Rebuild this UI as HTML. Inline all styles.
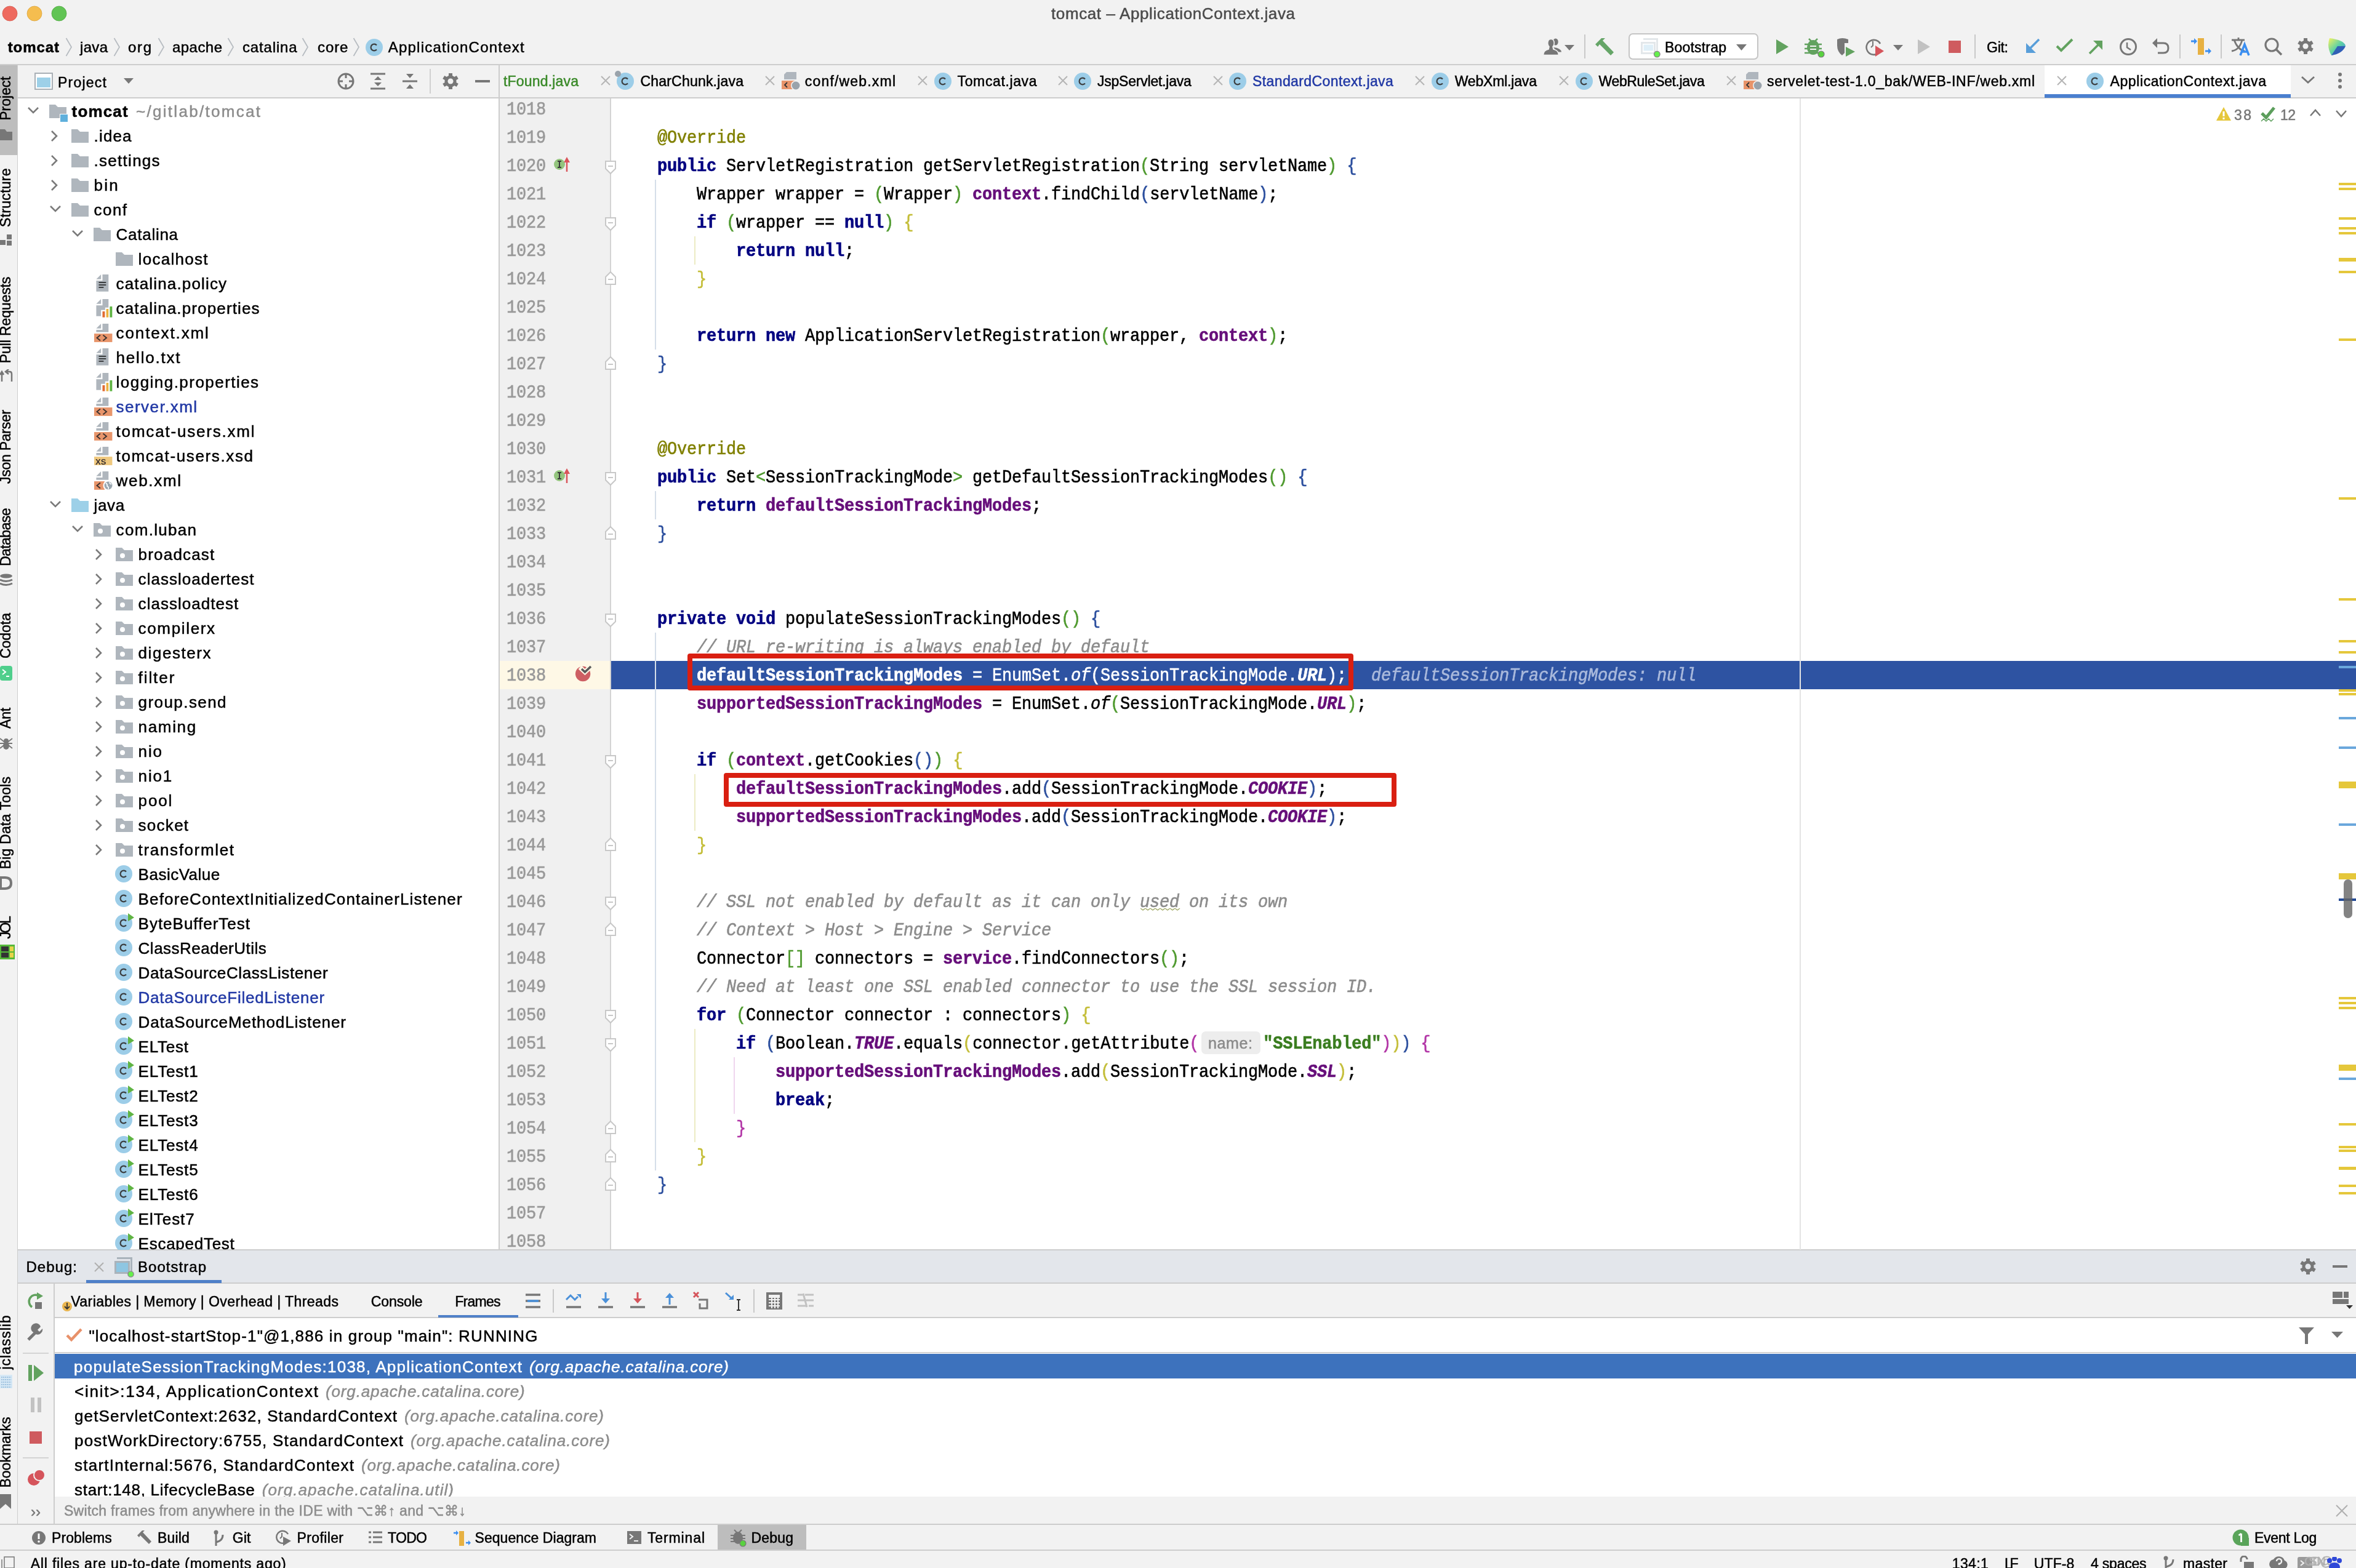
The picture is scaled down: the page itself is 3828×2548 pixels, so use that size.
<!DOCTYPE html>
<html><head><meta charset="utf-8"><style>
html,body{margin:0;padding:0;}
body{will-change:transform;width:3828px;height:2548px;overflow:hidden;position:relative;background:#f2f2f2;font-family:"Liberation Sans",sans-serif;}
</style></head><body>
<div style="position:absolute;left:0px;top:0px;width:3828px;height:104px;background:#f2f2f2;"></div>
<div style="position:absolute;left:0px;top:104px;width:3828px;height:2px;background:#cdcdcd;"></div>
<div style="position:absolute;left:0px;top:106px;width:28px;height:2412px;background:#f2f2f2;"></div>
<div style="position:absolute;left:28px;top:106px;width:1px;height:2412px;background:#cdcdcd;"></div>
<div style="position:absolute;left:0px;top:106px;width:28px;height:146px;background:#bdbdbd;"></div>
<div style="position:absolute;left:29px;top:106px;width:781px;height:53px;background:#f2f2f2;"></div>
<div style="position:absolute;left:29px;top:158px;width:781px;height:2px;background:#cdcdcd;"></div>
<div style="position:absolute;left:29px;top:160px;width:781px;height:1871px;background:#ffffff;"></div>
<div style="position:absolute;left:810px;top:106px;width:2px;height:1925px;background:#cdcdcd;"></div>
<div style="position:absolute;left:812px;top:106px;width:3016px;height:52px;background:#f2f2f2;"></div>
<div style="position:absolute;left:812px;top:158px;width:3016px;height:2px;background:#cdcdcd;"></div>
<div style="position:absolute;left:812px;top:160px;width:180px;height:1871px;background:#f0f0f0;"></div>
<div style="position:absolute;left:991px;top:160px;width:2px;height:1871px;background:#d3d3d3;"></div>
<div style="position:absolute;left:993px;top:160px;width:2835px;height:1871px;background:#ffffff;"></div>
<div style="position:absolute;left:29px;top:2030px;width:3799px;height:2px;background:#cdcdcd;"></div>
<div style="position:absolute;left:29px;top:2032px;width:3799px;height:52px;background:#e3e6eb;"></div>
<div style="position:absolute;left:29px;top:2084px;width:3799px;height:2px;background:#cdcdcd;"></div>
<div style="position:absolute;left:29px;top:2086px;width:58px;height:390px;background:#f2f2f2;"></div>
<div style="position:absolute;left:87px;top:2086px;width:2px;height:390px;background:#cdcdcd;"></div>
<div style="position:absolute;left:89px;top:2086px;width:3739px;height:54px;background:#f2f2f2;"></div>
<div style="position:absolute;left:89px;top:2140px;width:3739px;height:2px;background:#cdcdcd;"></div>
<div style="position:absolute;left:89px;top:2142px;width:3739px;height:56px;background:#ffffff;"></div>
<div style="position:absolute;left:89px;top:2197px;width:3739px;height:2px;background:#d4d4d4;"></div>
<div style="position:absolute;left:89px;top:2199px;width:3739px;height:233px;background:#ffffff;"></div>
<div style="position:absolute;left:89px;top:2200px;width:3739px;height:40px;background:#3d72bd;"></div>
<div style="position:absolute;left:89px;top:2432px;width:3739px;height:44px;background:#f2f2f2;"></div>
<div style="position:absolute;left:0px;top:2476px;width:3828px;height:2px;background:#cdcdcd;"></div>
<div style="position:absolute;left:0px;top:2478px;width:3828px;height:40px;background:#f2f2f2;"></div>
<div style="position:absolute;left:0px;top:2518px;width:3828px;height:2px;background:#cdcdcd;"></div>
<div style="position:absolute;left:0px;top:2520px;width:3828px;height:28px;background:#f2f2f2;"></div>
<div style="position:absolute;left:812px;top:1074px;width:179px;height:46px;background:#fef8e6;"></div>
<div style="position:absolute;left:993px;top:1074px;width:2835px;height:46px;background:#2e53a2;"></div>
<div style="position:absolute;left:1064.0px;top:292px;width:2px;height:276px;background:#d5dee9;"></div>
<div style="position:absolute;left:1128.0px;top:384px;width:2px;height:46px;background:#ecebc4;"></div>
<div style="position:absolute;left:1064.0px;top:798px;width:2px;height:46px;background:#d5dee9;"></div>
<div style="position:absolute;left:1064.0px;top:1028px;width:2px;height:874px;background:#d5dee9;"></div>
<div style="position:absolute;left:1128.0px;top:1258px;width:2px;height:92px;background:#ecebc4;"></div>
<div style="position:absolute;left:1128.0px;top:1672px;width:2px;height:184px;background:#ecebc4;"></div>
<div style="position:absolute;left:1192.0px;top:1718px;width:2px;height:92px;background:#efd6ee;"></div>
<div style="position:absolute;left:823px;top:155.5px;height:46px;transform:scaleY(1.12);transform-origin:0 30.5px;-webkit-text-stroke-width:0.55px;line-height:46px;font-family:'Liberation Mono',monospace;font-size:27px;letter-spacing:-0.202px;color:#999999;white-space:pre">1018</div>
<div style="position:absolute;left:823px;top:201.5px;height:46px;transform:scaleY(1.12);transform-origin:0 30.5px;-webkit-text-stroke-width:0.55px;line-height:46px;font-family:'Liberation Mono',monospace;font-size:27px;letter-spacing:-0.202px;color:#999999;white-space:pre">1019</div>
<div style="position:absolute;left:823px;top:247.5px;height:46px;transform:scaleY(1.12);transform-origin:0 30.5px;-webkit-text-stroke-width:0.55px;line-height:46px;font-family:'Liberation Mono',monospace;font-size:27px;letter-spacing:-0.202px;color:#999999;white-space:pre">1020</div>
<div style="position:absolute;left:823px;top:293.5px;height:46px;transform:scaleY(1.12);transform-origin:0 30.5px;-webkit-text-stroke-width:0.55px;line-height:46px;font-family:'Liberation Mono',monospace;font-size:27px;letter-spacing:-0.202px;color:#999999;white-space:pre">1021</div>
<div style="position:absolute;left:823px;top:339.5px;height:46px;transform:scaleY(1.12);transform-origin:0 30.5px;-webkit-text-stroke-width:0.55px;line-height:46px;font-family:'Liberation Mono',monospace;font-size:27px;letter-spacing:-0.202px;color:#999999;white-space:pre">1022</div>
<div style="position:absolute;left:823px;top:385.5px;height:46px;transform:scaleY(1.12);transform-origin:0 30.5px;-webkit-text-stroke-width:0.55px;line-height:46px;font-family:'Liberation Mono',monospace;font-size:27px;letter-spacing:-0.202px;color:#999999;white-space:pre">1023</div>
<div style="position:absolute;left:823px;top:431.5px;height:46px;transform:scaleY(1.12);transform-origin:0 30.5px;-webkit-text-stroke-width:0.55px;line-height:46px;font-family:'Liberation Mono',monospace;font-size:27px;letter-spacing:-0.202px;color:#999999;white-space:pre">1024</div>
<div style="position:absolute;left:823px;top:477.5px;height:46px;transform:scaleY(1.12);transform-origin:0 30.5px;-webkit-text-stroke-width:0.55px;line-height:46px;font-family:'Liberation Mono',monospace;font-size:27px;letter-spacing:-0.202px;color:#999999;white-space:pre">1025</div>
<div style="position:absolute;left:823px;top:523.5px;height:46px;transform:scaleY(1.12);transform-origin:0 30.5px;-webkit-text-stroke-width:0.55px;line-height:46px;font-family:'Liberation Mono',monospace;font-size:27px;letter-spacing:-0.202px;color:#999999;white-space:pre">1026</div>
<div style="position:absolute;left:823px;top:569.5px;height:46px;transform:scaleY(1.12);transform-origin:0 30.5px;-webkit-text-stroke-width:0.55px;line-height:46px;font-family:'Liberation Mono',monospace;font-size:27px;letter-spacing:-0.202px;color:#999999;white-space:pre">1027</div>
<div style="position:absolute;left:823px;top:615.5px;height:46px;transform:scaleY(1.12);transform-origin:0 30.5px;-webkit-text-stroke-width:0.55px;line-height:46px;font-family:'Liberation Mono',monospace;font-size:27px;letter-spacing:-0.202px;color:#999999;white-space:pre">1028</div>
<div style="position:absolute;left:823px;top:661.5px;height:46px;transform:scaleY(1.12);transform-origin:0 30.5px;-webkit-text-stroke-width:0.55px;line-height:46px;font-family:'Liberation Mono',monospace;font-size:27px;letter-spacing:-0.202px;color:#999999;white-space:pre">1029</div>
<div style="position:absolute;left:823px;top:707.5px;height:46px;transform:scaleY(1.12);transform-origin:0 30.5px;-webkit-text-stroke-width:0.55px;line-height:46px;font-family:'Liberation Mono',monospace;font-size:27px;letter-spacing:-0.202px;color:#999999;white-space:pre">1030</div>
<div style="position:absolute;left:823px;top:753.5px;height:46px;transform:scaleY(1.12);transform-origin:0 30.5px;-webkit-text-stroke-width:0.55px;line-height:46px;font-family:'Liberation Mono',monospace;font-size:27px;letter-spacing:-0.202px;color:#999999;white-space:pre">1031</div>
<div style="position:absolute;left:823px;top:799.5px;height:46px;transform:scaleY(1.12);transform-origin:0 30.5px;-webkit-text-stroke-width:0.55px;line-height:46px;font-family:'Liberation Mono',monospace;font-size:27px;letter-spacing:-0.202px;color:#999999;white-space:pre">1032</div>
<div style="position:absolute;left:823px;top:845.5px;height:46px;transform:scaleY(1.12);transform-origin:0 30.5px;-webkit-text-stroke-width:0.55px;line-height:46px;font-family:'Liberation Mono',monospace;font-size:27px;letter-spacing:-0.202px;color:#999999;white-space:pre">1033</div>
<div style="position:absolute;left:823px;top:891.5px;height:46px;transform:scaleY(1.12);transform-origin:0 30.5px;-webkit-text-stroke-width:0.55px;line-height:46px;font-family:'Liberation Mono',monospace;font-size:27px;letter-spacing:-0.202px;color:#999999;white-space:pre">1034</div>
<div style="position:absolute;left:823px;top:937.5px;height:46px;transform:scaleY(1.12);transform-origin:0 30.5px;-webkit-text-stroke-width:0.55px;line-height:46px;font-family:'Liberation Mono',monospace;font-size:27px;letter-spacing:-0.202px;color:#999999;white-space:pre">1035</div>
<div style="position:absolute;left:823px;top:983.5px;height:46px;transform:scaleY(1.12);transform-origin:0 30.5px;-webkit-text-stroke-width:0.55px;line-height:46px;font-family:'Liberation Mono',monospace;font-size:27px;letter-spacing:-0.202px;color:#999999;white-space:pre">1036</div>
<div style="position:absolute;left:823px;top:1029.5px;height:46px;transform:scaleY(1.12);transform-origin:0 30.5px;-webkit-text-stroke-width:0.55px;line-height:46px;font-family:'Liberation Mono',monospace;font-size:27px;letter-spacing:-0.202px;color:#999999;white-space:pre">1037</div>
<div style="position:absolute;left:823px;top:1075.5px;height:46px;transform:scaleY(1.12);transform-origin:0 30.5px;-webkit-text-stroke-width:0.55px;line-height:46px;font-family:'Liberation Mono',monospace;font-size:27px;letter-spacing:-0.202px;color:#999999;white-space:pre">1038</div>
<div style="position:absolute;left:823px;top:1121.5px;height:46px;transform:scaleY(1.12);transform-origin:0 30.5px;-webkit-text-stroke-width:0.55px;line-height:46px;font-family:'Liberation Mono',monospace;font-size:27px;letter-spacing:-0.202px;color:#999999;white-space:pre">1039</div>
<div style="position:absolute;left:823px;top:1167.5px;height:46px;transform:scaleY(1.12);transform-origin:0 30.5px;-webkit-text-stroke-width:0.55px;line-height:46px;font-family:'Liberation Mono',monospace;font-size:27px;letter-spacing:-0.202px;color:#999999;white-space:pre">1040</div>
<div style="position:absolute;left:823px;top:1213.5px;height:46px;transform:scaleY(1.12);transform-origin:0 30.5px;-webkit-text-stroke-width:0.55px;line-height:46px;font-family:'Liberation Mono',monospace;font-size:27px;letter-spacing:-0.202px;color:#999999;white-space:pre">1041</div>
<div style="position:absolute;left:823px;top:1259.5px;height:46px;transform:scaleY(1.12);transform-origin:0 30.5px;-webkit-text-stroke-width:0.55px;line-height:46px;font-family:'Liberation Mono',monospace;font-size:27px;letter-spacing:-0.202px;color:#999999;white-space:pre">1042</div>
<div style="position:absolute;left:823px;top:1305.5px;height:46px;transform:scaleY(1.12);transform-origin:0 30.5px;-webkit-text-stroke-width:0.55px;line-height:46px;font-family:'Liberation Mono',monospace;font-size:27px;letter-spacing:-0.202px;color:#999999;white-space:pre">1043</div>
<div style="position:absolute;left:823px;top:1351.5px;height:46px;transform:scaleY(1.12);transform-origin:0 30.5px;-webkit-text-stroke-width:0.55px;line-height:46px;font-family:'Liberation Mono',monospace;font-size:27px;letter-spacing:-0.202px;color:#999999;white-space:pre">1044</div>
<div style="position:absolute;left:823px;top:1397.5px;height:46px;transform:scaleY(1.12);transform-origin:0 30.5px;-webkit-text-stroke-width:0.55px;line-height:46px;font-family:'Liberation Mono',monospace;font-size:27px;letter-spacing:-0.202px;color:#999999;white-space:pre">1045</div>
<div style="position:absolute;left:823px;top:1443.5px;height:46px;transform:scaleY(1.12);transform-origin:0 30.5px;-webkit-text-stroke-width:0.55px;line-height:46px;font-family:'Liberation Mono',monospace;font-size:27px;letter-spacing:-0.202px;color:#999999;white-space:pre">1046</div>
<div style="position:absolute;left:823px;top:1489.5px;height:46px;transform:scaleY(1.12);transform-origin:0 30.5px;-webkit-text-stroke-width:0.55px;line-height:46px;font-family:'Liberation Mono',monospace;font-size:27px;letter-spacing:-0.202px;color:#999999;white-space:pre">1047</div>
<div style="position:absolute;left:823px;top:1535.5px;height:46px;transform:scaleY(1.12);transform-origin:0 30.5px;-webkit-text-stroke-width:0.55px;line-height:46px;font-family:'Liberation Mono',monospace;font-size:27px;letter-spacing:-0.202px;color:#999999;white-space:pre">1048</div>
<div style="position:absolute;left:823px;top:1581.5px;height:46px;transform:scaleY(1.12);transform-origin:0 30.5px;-webkit-text-stroke-width:0.55px;line-height:46px;font-family:'Liberation Mono',monospace;font-size:27px;letter-spacing:-0.202px;color:#999999;white-space:pre">1049</div>
<div style="position:absolute;left:823px;top:1627.5px;height:46px;transform:scaleY(1.12);transform-origin:0 30.5px;-webkit-text-stroke-width:0.55px;line-height:46px;font-family:'Liberation Mono',monospace;font-size:27px;letter-spacing:-0.202px;color:#999999;white-space:pre">1050</div>
<div style="position:absolute;left:823px;top:1673.5px;height:46px;transform:scaleY(1.12);transform-origin:0 30.5px;-webkit-text-stroke-width:0.55px;line-height:46px;font-family:'Liberation Mono',monospace;font-size:27px;letter-spacing:-0.202px;color:#999999;white-space:pre">1051</div>
<div style="position:absolute;left:823px;top:1719.5px;height:46px;transform:scaleY(1.12);transform-origin:0 30.5px;-webkit-text-stroke-width:0.55px;line-height:46px;font-family:'Liberation Mono',monospace;font-size:27px;letter-spacing:-0.202px;color:#999999;white-space:pre">1052</div>
<div style="position:absolute;left:823px;top:1765.5px;height:46px;transform:scaleY(1.12);transform-origin:0 30.5px;-webkit-text-stroke-width:0.55px;line-height:46px;font-family:'Liberation Mono',monospace;font-size:27px;letter-spacing:-0.202px;color:#999999;white-space:pre">1053</div>
<div style="position:absolute;left:823px;top:1811.5px;height:46px;transform:scaleY(1.12);transform-origin:0 30.5px;-webkit-text-stroke-width:0.55px;line-height:46px;font-family:'Liberation Mono',monospace;font-size:27px;letter-spacing:-0.202px;color:#999999;white-space:pre">1054</div>
<div style="position:absolute;left:823px;top:1857.5px;height:46px;transform:scaleY(1.12);transform-origin:0 30.5px;-webkit-text-stroke-width:0.55px;line-height:46px;font-family:'Liberation Mono',monospace;font-size:27px;letter-spacing:-0.202px;color:#999999;white-space:pre">1055</div>
<div style="position:absolute;left:823px;top:1903.5px;height:46px;transform:scaleY(1.12);transform-origin:0 30.5px;-webkit-text-stroke-width:0.55px;line-height:46px;font-family:'Liberation Mono',monospace;font-size:27px;letter-spacing:-0.202px;color:#999999;white-space:pre">1056</div>
<div style="position:absolute;left:823px;top:1949.5px;height:46px;transform:scaleY(1.12);transform-origin:0 30.5px;-webkit-text-stroke-width:0.55px;line-height:46px;font-family:'Liberation Mono',monospace;font-size:27px;letter-spacing:-0.202px;color:#999999;white-space:pre">1057</div>
<div style="position:absolute;left:823px;top:1995.5px;height:46px;transform:scaleY(1.12);transform-origin:0 30.5px;-webkit-text-stroke-width:0.55px;line-height:46px;font-family:'Liberation Mono',monospace;font-size:27px;letter-spacing:-0.202px;color:#999999;white-space:pre">1058</div>
<div style="position:absolute;left:1004px;top:201.5px;height:46px;transform:scaleY(1.12);transform-origin:0 30.5px;-webkit-text-stroke-width:0.55px;line-height:46px;font-family:'Liberation Mono',monospace;font-size:27px;letter-spacing:-0.202px;white-space:pre"><span style="color:#000">    </span><span style="color:#808000">@Override</span></div>
<div style="position:absolute;left:1004px;top:247.5px;height:46px;transform:scaleY(1.12);transform-origin:0 30.5px;-webkit-text-stroke-width:0.55px;line-height:46px;font-family:'Liberation Mono',monospace;font-size:27px;letter-spacing:-0.202px;white-space:pre"><span style="color:#000">    </span><span style="color:#000080;font-weight:bold">public</span><span style="color:#000"> ServletRegistration getServletRegistration</span><span style="color:#4f9a2f">(</span><span style="color:#000">String servletName</span><span style="color:#4f9a2f">)</span><span style="color:#000"> </span><span style="color:#2c4f9e">{</span></div>
<div style="position:absolute;left:1004px;top:293.5px;height:46px;transform:scaleY(1.12);transform-origin:0 30.5px;-webkit-text-stroke-width:0.55px;line-height:46px;font-family:'Liberation Mono',monospace;font-size:27px;letter-spacing:-0.202px;white-space:pre"><span style="color:#000">        Wrapper wrapper = </span><span style="color:#4f9a2f">(</span><span style="color:#000">Wrapper</span><span style="color:#4f9a2f">)</span><span style="color:#000"> </span><span style="color:#660e7a;font-weight:bold">context</span><span style="color:#000">.findChild</span><span style="color:#2c4f9e">(</span><span style="color:#000">servletName</span><span style="color:#2c4f9e">)</span><span style="color:#000">;</span></div>
<div style="position:absolute;left:1004px;top:339.5px;height:46px;transform:scaleY(1.12);transform-origin:0 30.5px;-webkit-text-stroke-width:0.55px;line-height:46px;font-family:'Liberation Mono',monospace;font-size:27px;letter-spacing:-0.202px;white-space:pre"><span style="color:#000">        </span><span style="color:#000080;font-weight:bold">if</span><span style="color:#000"> </span><span style="color:#4f9a2f">(</span><span style="color:#000">wrapper == </span><span style="color:#000080;font-weight:bold">null</span><span style="color:#4f9a2f">)</span><span style="color:#000"> </span><span style="color:#c4be3a">{</span></div>
<div style="position:absolute;left:1004px;top:385.5px;height:46px;transform:scaleY(1.12);transform-origin:0 30.5px;-webkit-text-stroke-width:0.55px;line-height:46px;font-family:'Liberation Mono',monospace;font-size:27px;letter-spacing:-0.202px;white-space:pre"><span style="color:#000">            </span><span style="color:#000080;font-weight:bold">return null</span><span style="color:#000">;</span></div>
<div style="position:absolute;left:1004px;top:431.5px;height:46px;transform:scaleY(1.12);transform-origin:0 30.5px;-webkit-text-stroke-width:0.55px;line-height:46px;font-family:'Liberation Mono',monospace;font-size:27px;letter-spacing:-0.202px;white-space:pre"><span style="color:#000">        </span><span style="color:#c4be3a">}</span></div>
<div style="position:absolute;left:1004px;top:523.5px;height:46px;transform:scaleY(1.12);transform-origin:0 30.5px;-webkit-text-stroke-width:0.55px;line-height:46px;font-family:'Liberation Mono',monospace;font-size:27px;letter-spacing:-0.202px;white-space:pre"><span style="color:#000">        </span><span style="color:#000080;font-weight:bold">return new</span><span style="color:#000"> ApplicationServletRegistration</span><span style="color:#4f9a2f">(</span><span style="color:#000">wrapper, </span><span style="color:#660e7a;font-weight:bold">context</span><span style="color:#4f9a2f">)</span><span style="color:#000">;</span></div>
<div style="position:absolute;left:1004px;top:569.5px;height:46px;transform:scaleY(1.12);transform-origin:0 30.5px;-webkit-text-stroke-width:0.55px;line-height:46px;font-family:'Liberation Mono',monospace;font-size:27px;letter-spacing:-0.202px;white-space:pre"><span style="color:#000">    </span><span style="color:#2c4f9e">}</span></div>
<div style="position:absolute;left:1004px;top:707.5px;height:46px;transform:scaleY(1.12);transform-origin:0 30.5px;-webkit-text-stroke-width:0.55px;line-height:46px;font-family:'Liberation Mono',monospace;font-size:27px;letter-spacing:-0.202px;white-space:pre"><span style="color:#000">    </span><span style="color:#808000">@Override</span></div>
<div style="position:absolute;left:1004px;top:753.5px;height:46px;transform:scaleY(1.12);transform-origin:0 30.5px;-webkit-text-stroke-width:0.55px;line-height:46px;font-family:'Liberation Mono',monospace;font-size:27px;letter-spacing:-0.202px;white-space:pre"><span style="color:#000">    </span><span style="color:#000080;font-weight:bold">public</span><span style="color:#000"> Set</span><span style="color:#4f9a2f">&lt;</span><span style="color:#000">SessionTrackingMode</span><span style="color:#4f9a2f">&gt;</span><span style="color:#000"> getDefaultSessionTrackingModes</span><span style="color:#4f9a2f">()</span><span style="color:#000"> </span><span style="color:#2c4f9e">{</span></div>
<div style="position:absolute;left:1004px;top:799.5px;height:46px;transform:scaleY(1.12);transform-origin:0 30.5px;-webkit-text-stroke-width:0.55px;line-height:46px;font-family:'Liberation Mono',monospace;font-size:27px;letter-spacing:-0.202px;white-space:pre"><span style="color:#000">        </span><span style="color:#000080;font-weight:bold">return</span><span style="color:#000"> </span><span style="color:#660e7a;font-weight:bold">defaultSessionTrackingModes</span><span style="color:#000">;</span></div>
<div style="position:absolute;left:1004px;top:845.5px;height:46px;transform:scaleY(1.12);transform-origin:0 30.5px;-webkit-text-stroke-width:0.55px;line-height:46px;font-family:'Liberation Mono',monospace;font-size:27px;letter-spacing:-0.202px;white-space:pre"><span style="color:#000">    </span><span style="color:#2c4f9e">}</span></div>
<div style="position:absolute;left:1004px;top:983.5px;height:46px;transform:scaleY(1.12);transform-origin:0 30.5px;-webkit-text-stroke-width:0.55px;line-height:46px;font-family:'Liberation Mono',monospace;font-size:27px;letter-spacing:-0.202px;white-space:pre"><span style="color:#000">    </span><span style="color:#000080;font-weight:bold">private void</span><span style="color:#000"> populateSessionTrackingModes</span><span style="color:#4f9a2f">()</span><span style="color:#000"> </span><span style="color:#2c4f9e">{</span></div>
<div style="position:absolute;left:1004px;top:1029.5px;height:46px;transform:scaleY(1.12);transform-origin:0 30.5px;-webkit-text-stroke-width:0.55px;line-height:46px;font-family:'Liberation Mono',monospace;font-size:27px;letter-spacing:-0.202px;white-space:pre"><span style="color:#000">        </span><span style="color:#8c8c8c;font-style:italic">// URL re-writing is always enabled by default</span></div>
<div style="position:absolute;left:1004px;top:1075.5px;height:46px;transform:scaleY(1.12);transform-origin:0 30.5px;-webkit-text-stroke-width:0.55px;line-height:46px;font-family:'Liberation Mono',monospace;font-size:27px;letter-spacing:-0.202px;white-space:pre"><span style="color:#000">        </span><span style="color:#fff;font-weight:bold">defaultSessionTrackingModes</span><span style="color:#fff"> = EnumSet.</span><span style="color:#fff;font-style:italic">of</span><span style="color:#fff">(SessionTrackingMode.</span><span style="color:#fff;font-weight:bold;font-style:italic">URL</span><span style="color:#fff">);</span></div>
<div style="position:absolute;left:1004px;top:1121.5px;height:46px;transform:scaleY(1.12);transform-origin:0 30.5px;-webkit-text-stroke-width:0.55px;line-height:46px;font-family:'Liberation Mono',monospace;font-size:27px;letter-spacing:-0.202px;white-space:pre"><span style="color:#000">        </span><span style="color:#660e7a;font-weight:bold">supportedSessionTrackingModes</span><span style="color:#000"> = EnumSet.</span><span style="color:#000;font-style:italic">of</span><span style="color:#4f9a2f">(</span><span style="color:#000">SessionTrackingMode.</span><span style="color:#660e7a;font-weight:bold;font-style:italic">URL</span><span style="color:#4f9a2f">)</span><span style="color:#000">;</span></div>
<div style="position:absolute;left:1004px;top:1213.5px;height:46px;transform:scaleY(1.12);transform-origin:0 30.5px;-webkit-text-stroke-width:0.55px;line-height:46px;font-family:'Liberation Mono',monospace;font-size:27px;letter-spacing:-0.202px;white-space:pre"><span style="color:#000">        </span><span style="color:#000080;font-weight:bold">if</span><span style="color:#000"> </span><span style="color:#4f9a2f">(</span><span style="color:#660e7a;font-weight:bold">context</span><span style="color:#000">.getCookies</span><span style="color:#2c4f9e">()</span><span style="color:#4f9a2f">)</span><span style="color:#000"> </span><span style="color:#c4be3a">{</span></div>
<div style="position:absolute;left:1004px;top:1259.5px;height:46px;transform:scaleY(1.12);transform-origin:0 30.5px;-webkit-text-stroke-width:0.55px;line-height:46px;font-family:'Liberation Mono',monospace;font-size:27px;letter-spacing:-0.202px;white-space:pre"><span style="color:#000">            </span><span style="color:#660e7a;font-weight:bold">defaultSessionTrackingModes</span><span style="color:#000">.add</span><span style="color:#2c4f9e">(</span><span style="color:#000">SessionTrackingMode.</span><span style="color:#660e7a;font-weight:bold;font-style:italic">COOKIE</span><span style="color:#2c4f9e">)</span><span style="color:#000">;</span></div>
<div style="position:absolute;left:1004px;top:1305.5px;height:46px;transform:scaleY(1.12);transform-origin:0 30.5px;-webkit-text-stroke-width:0.55px;line-height:46px;font-family:'Liberation Mono',monospace;font-size:27px;letter-spacing:-0.202px;white-space:pre"><span style="color:#000">            </span><span style="color:#660e7a;font-weight:bold">supportedSessionTrackingModes</span><span style="color:#000">.add</span><span style="color:#2c4f9e">(</span><span style="color:#000">SessionTrackingMode.</span><span style="color:#660e7a;font-weight:bold;font-style:italic">COOKIE</span><span style="color:#2c4f9e">)</span><span style="color:#000">;</span></div>
<div style="position:absolute;left:1004px;top:1351.5px;height:46px;transform:scaleY(1.12);transform-origin:0 30.5px;-webkit-text-stroke-width:0.55px;line-height:46px;font-family:'Liberation Mono',monospace;font-size:27px;letter-spacing:-0.202px;white-space:pre"><span style="color:#000">        </span><span style="color:#c4be3a">}</span></div>
<div style="position:absolute;left:1004px;top:1443.5px;height:46px;transform:scaleY(1.12);transform-origin:0 30.5px;-webkit-text-stroke-width:0.55px;line-height:46px;font-family:'Liberation Mono',monospace;font-size:27px;letter-spacing:-0.202px;white-space:pre"><span style="color:#000">        </span><span style="color:#8c8c8c;font-style:italic">// SSL not enabled by default as it can only used on its own</span></div>
<div style="position:absolute;left:1004px;top:1489.5px;height:46px;transform:scaleY(1.12);transform-origin:0 30.5px;-webkit-text-stroke-width:0.55px;line-height:46px;font-family:'Liberation Mono',monospace;font-size:27px;letter-spacing:-0.202px;white-space:pre"><span style="color:#000">        </span><span style="color:#8c8c8c;font-style:italic">// Context &gt; Host &gt; Engine &gt; Service</span></div>
<div style="position:absolute;left:1004px;top:1535.5px;height:46px;transform:scaleY(1.12);transform-origin:0 30.5px;-webkit-text-stroke-width:0.55px;line-height:46px;font-family:'Liberation Mono',monospace;font-size:27px;letter-spacing:-0.202px;white-space:pre"><span style="color:#000">        Connector</span><span style="color:#4f9a2f">[]</span><span style="color:#000"> connectors = </span><span style="color:#660e7a;font-weight:bold">service</span><span style="color:#000">.findConnectors</span><span style="color:#4f9a2f">()</span><span style="color:#000">;</span></div>
<div style="position:absolute;left:1004px;top:1581.5px;height:46px;transform:scaleY(1.12);transform-origin:0 30.5px;-webkit-text-stroke-width:0.55px;line-height:46px;font-family:'Liberation Mono',monospace;font-size:27px;letter-spacing:-0.202px;white-space:pre"><span style="color:#000">        </span><span style="color:#8c8c8c;font-style:italic">// Need at least one SSL enabled connector to use the SSL session ID.</span></div>
<div style="position:absolute;left:1004px;top:1627.5px;height:46px;transform:scaleY(1.12);transform-origin:0 30.5px;-webkit-text-stroke-width:0.55px;line-height:46px;font-family:'Liberation Mono',monospace;font-size:27px;letter-spacing:-0.202px;white-space:pre"><span style="color:#000">        </span><span style="color:#000080;font-weight:bold">for</span><span style="color:#000"> </span><span style="color:#4f9a2f">(</span><span style="color:#000">Connector connector : connectors</span><span style="color:#4f9a2f">)</span><span style="color:#000"> </span><span style="color:#c4be3a">{</span></div>
<div style="position:absolute;left:1004px;top:1673.5px;height:46px;transform:scaleY(1.12);transform-origin:0 30.5px;-webkit-text-stroke-width:0.55px;line-height:46px;font-family:'Liberation Mono',monospace;font-size:27px;letter-spacing:-0.202px;white-space:pre"><span style="color:#000">            </span><span style="color:#000080;font-weight:bold">if</span><span style="color:#000"> </span><span style="color:#2c4f9e">(</span><span style="color:#000">Boolean.</span><span style="color:#660e7a;font-weight:bold;font-style:italic">TRUE</span><span style="color:#000">.equals</span><span style="color:#c4be3a">(</span><span style="color:#000">connector.getAttribute</span><span style="color:#b235a6">(</span><span style="display:inline-block;width:104px"></span><span style="color:#3a7d1f;font-weight:bold">"SSLEnabled"</span><span style="color:#b235a6">)</span><span style="color:#c4be3a">)</span><span style="color:#2c4f9e">)</span><span style="color:#000"> </span><span style="color:#b235a6">{</span></div>
<div style="position:absolute;left:1004px;top:1719.5px;height:46px;transform:scaleY(1.12);transform-origin:0 30.5px;-webkit-text-stroke-width:0.55px;line-height:46px;font-family:'Liberation Mono',monospace;font-size:27px;letter-spacing:-0.202px;white-space:pre"><span style="color:#000">                </span><span style="color:#660e7a;font-weight:bold">supportedSessionTrackingModes</span><span style="color:#000">.add</span><span style="color:#c4be3a">(</span><span style="color:#000">SessionTrackingMode.</span><span style="color:#660e7a;font-weight:bold;font-style:italic">SSL</span><span style="color:#c4be3a">)</span><span style="color:#000">;</span></div>
<div style="position:absolute;left:1004px;top:1765.5px;height:46px;transform:scaleY(1.12);transform-origin:0 30.5px;-webkit-text-stroke-width:0.55px;line-height:46px;font-family:'Liberation Mono',monospace;font-size:27px;letter-spacing:-0.202px;white-space:pre"><span style="color:#000">                </span><span style="color:#000080;font-weight:bold">break</span><span style="color:#000">;</span></div>
<div style="position:absolute;left:1004px;top:1811.5px;height:46px;transform:scaleY(1.12);transform-origin:0 30.5px;-webkit-text-stroke-width:0.55px;line-height:46px;font-family:'Liberation Mono',monospace;font-size:27px;letter-spacing:-0.202px;white-space:pre"><span style="color:#000">            </span><span style="color:#b235a6">}</span></div>
<div style="position:absolute;left:1004px;top:1857.5px;height:46px;transform:scaleY(1.12);transform-origin:0 30.5px;-webkit-text-stroke-width:0.55px;line-height:46px;font-family:'Liberation Mono',monospace;font-size:27px;letter-spacing:-0.202px;white-space:pre"><span style="color:#000">        </span><span style="color:#c4be3a">}</span></div>
<div style="position:absolute;left:1004px;top:1903.5px;height:46px;transform:scaleY(1.12);transform-origin:0 30.5px;-webkit-text-stroke-width:0.55px;line-height:46px;font-family:'Liberation Mono',monospace;font-size:27px;letter-spacing:-0.202px;white-space:pre"><span style="color:#000">    </span><span style="color:#2c4f9e">}</span></div>
<div style="position:absolute;left:2228px;top:1075.5px;height:46px;transform:scaleY(1.12);transform-origin:0 30.5px;-webkit-text-stroke-width:0.55px;line-height:46px;font-family:'Liberation Mono',monospace;font-size:27px;letter-spacing:-0.202px;white-space:pre;color:#a9b9dc;font-style:italic">defaultSessionTrackingModes: null</div>
<div style="position:absolute;left:1952px;top:1676px;width:96px;height:37px;background:#ededed;border-radius:7px;"></div>
<div style="position:absolute;left:1963px;top:1679.2px;height:32.5px;line-height:32.5px;font-family:'Liberation Sans',sans-serif;font-size:25px;color:#8a8a8a;font-weight:400;font-style:normal;letter-spacing:0.600px;white-space:pre;-webkit-text-stroke:0.5px #8a8a8a;">name:</div>
<svg style="position:absolute;left:1853px;top:1476px;" width="66" height="5" viewBox="0 0 66 5"><polyline points="0,0 4,3 8,0 12,3 16,0 20,3 24,0 28,3 32,0 36,3 40,0 44,3 48,0 52,3 56,0 60,3 64,0" fill="none" stroke="#9aa35a" stroke-width="1.2"/></svg>
<div style="position:absolute;left:1117px;top:1062px;width:1082px;height:60px;background:transparent;box-sizing:border-box;border:8px solid #d91f11;border-radius:4px;"></div>
<div style="position:absolute;left:1176px;top:1256px;width:1093px;height:55px;background:transparent;box-sizing:border-box;border:8px solid #d91f11;border-radius:4px;"></div>
<svg style="position:absolute;left:983px;top:261px;" width="18" height="23" viewBox="0 0 18 23"><path d="M1,1 H17 V13 L9,21 L1,13 Z" fill="#fff" stroke="#c8c8c8" stroke-width="2"/><path d="M5,9 H13" stroke="#c8c8c8" stroke-width="2"/></svg>
<svg style="position:absolute;left:983px;top:353px;" width="18" height="23" viewBox="0 0 18 23"><path d="M1,1 H17 V13 L9,21 L1,13 Z" fill="#fff" stroke="#c8c8c8" stroke-width="2"/><path d="M5,9 H13" stroke="#c8c8c8" stroke-width="2"/></svg>
<svg style="position:absolute;left:983px;top:767px;" width="18" height="23" viewBox="0 0 18 23"><path d="M1,1 H17 V13 L9,21 L1,13 Z" fill="#fff" stroke="#c8c8c8" stroke-width="2"/><path d="M5,9 H13" stroke="#c8c8c8" stroke-width="2"/></svg>
<svg style="position:absolute;left:983px;top:997px;" width="18" height="23" viewBox="0 0 18 23"><path d="M1,1 H17 V13 L9,21 L1,13 Z" fill="#fff" stroke="#c8c8c8" stroke-width="2"/><path d="M5,9 H13" stroke="#c8c8c8" stroke-width="2"/></svg>
<svg style="position:absolute;left:983px;top:1227px;" width="18" height="23" viewBox="0 0 18 23"><path d="M1,1 H17 V13 L9,21 L1,13 Z" fill="#fff" stroke="#c8c8c8" stroke-width="2"/><path d="M5,9 H13" stroke="#c8c8c8" stroke-width="2"/></svg>
<svg style="position:absolute;left:983px;top:1457px;" width="18" height="23" viewBox="0 0 18 23"><path d="M1,1 H17 V13 L9,21 L1,13 Z" fill="#fff" stroke="#c8c8c8" stroke-width="2"/><path d="M5,9 H13" stroke="#c8c8c8" stroke-width="2"/></svg>
<svg style="position:absolute;left:983px;top:1641px;" width="18" height="23" viewBox="0 0 18 23"><path d="M1,1 H17 V13 L9,21 L1,13 Z" fill="#fff" stroke="#c8c8c8" stroke-width="2"/><path d="M5,9 H13" stroke="#c8c8c8" stroke-width="2"/></svg>
<svg style="position:absolute;left:983px;top:1687px;" width="18" height="23" viewBox="0 0 18 23"><path d="M1,1 H17 V13 L9,21 L1,13 Z" fill="#fff" stroke="#c8c8c8" stroke-width="2"/><path d="M5,9 H13" stroke="#c8c8c8" stroke-width="2"/></svg>
<svg style="position:absolute;left:983px;top:440px;" width="18" height="23" viewBox="0 0 18 23"><path d="M1,22 H17 V10 L9,2 L1,10 Z" fill="#fff" stroke="#c8c8c8" stroke-width="2"/><path d="M5,14 H13" stroke="#c8c8c8" stroke-width="2"/></svg>
<svg style="position:absolute;left:983px;top:578px;" width="18" height="23" viewBox="0 0 18 23"><path d="M1,22 H17 V10 L9,2 L1,10 Z" fill="#fff" stroke="#c8c8c8" stroke-width="2"/><path d="M5,14 H13" stroke="#c8c8c8" stroke-width="2"/></svg>
<svg style="position:absolute;left:983px;top:854px;" width="18" height="23" viewBox="0 0 18 23"><path d="M1,22 H17 V10 L9,2 L1,10 Z" fill="#fff" stroke="#c8c8c8" stroke-width="2"/><path d="M5,14 H13" stroke="#c8c8c8" stroke-width="2"/></svg>
<svg style="position:absolute;left:983px;top:1360px;" width="18" height="23" viewBox="0 0 18 23"><path d="M1,22 H17 V10 L9,2 L1,10 Z" fill="#fff" stroke="#c8c8c8" stroke-width="2"/><path d="M5,14 H13" stroke="#c8c8c8" stroke-width="2"/></svg>
<svg style="position:absolute;left:983px;top:1498px;" width="18" height="23" viewBox="0 0 18 23"><path d="M1,22 H17 V10 L9,2 L1,10 Z" fill="#fff" stroke="#c8c8c8" stroke-width="2"/><path d="M5,14 H13" stroke="#c8c8c8" stroke-width="2"/></svg>
<svg style="position:absolute;left:983px;top:1820px;" width="18" height="23" viewBox="0 0 18 23"><path d="M1,22 H17 V10 L9,2 L1,10 Z" fill="#fff" stroke="#c8c8c8" stroke-width="2"/><path d="M5,14 H13" stroke="#c8c8c8" stroke-width="2"/></svg>
<svg style="position:absolute;left:983px;top:1866px;" width="18" height="23" viewBox="0 0 18 23"><path d="M1,22 H17 V10 L9,2 L1,10 Z" fill="#fff" stroke="#c8c8c8" stroke-width="2"/><path d="M5,14 H13" stroke="#c8c8c8" stroke-width="2"/></svg>
<svg style="position:absolute;left:983px;top:1912px;" width="18" height="23" viewBox="0 0 18 23"><path d="M1,22 H17 V10 L9,2 L1,10 Z" fill="#fff" stroke="#c8c8c8" stroke-width="2"/><path d="M5,14 H13" stroke="#c8c8c8" stroke-width="2"/></svg>
<svg style="position:absolute;left:898px;top:252px;" width="34" height="34" viewBox="0 0 34 34"><circle cx="11" cy="15" r="9" fill="#93c47d"/><path d="M8,10 H14 M11,10 V20 M8,20 H14" stroke="#3a3a3a" stroke-width="2"/><path d="M23,27 V8" stroke="#d9545a" stroke-width="2.5"/><path d="M18,12 L23,3 L28,12 Z" fill="#d9545a"/></svg>
<svg style="position:absolute;left:898px;top:758px;" width="34" height="34" viewBox="0 0 34 34"><circle cx="11" cy="15" r="9" fill="#93c47d"/><path d="M8,10 H14 M11,10 V20 M8,20 H14" stroke="#3a3a3a" stroke-width="2"/><path d="M23,27 V8" stroke="#d9545a" stroke-width="2.5"/><path d="M18,12 L23,3 L28,12 Z" fill="#d9545a"/></svg>
<svg style="position:absolute;left:933px;top:1080px;" width="32" height="30" viewBox="0 0 32 30"><circle cx="14.1" cy="15" r="12.2" fill="#cd5f63"/><path d="M12,7 L17.4,12 L28,2" stroke="#fef8e6" stroke-width="7.5" fill="none" stroke-linecap="square"/><path d="M12,7 L17.4,12 L27,3" stroke="#5a5a5a" stroke-width="3.6" fill="none"/></svg>
<div style="position:absolute;left:3800px;top:297px;width:28px;height:4px;background:#e5c73b;"></div>
<div style="position:absolute;left:3800px;top:305px;width:28px;height:4px;background:#e5c73b;"></div>
<div style="position:absolute;left:3800px;top:353px;width:28px;height:4px;background:#e5c73b;"></div>
<div style="position:absolute;left:3800px;top:369px;width:28px;height:4px;background:#e5c73b;"></div>
<div style="position:absolute;left:3800px;top:377px;width:28px;height:4px;background:#e5c73b;"></div>
<div style="position:absolute;left:3800px;top:419px;width:28px;height:6px;background:#e5c73b;"></div>
<div style="position:absolute;left:3800px;top:440px;width:28px;height:4px;background:#e5c73b;"></div>
<div style="position:absolute;left:3800px;top:550px;width:28px;height:4px;background:#e5c73b;"></div>
<div style="position:absolute;left:3800px;top:808px;width:28px;height:4px;background:#e5c73b;"></div>
<div style="position:absolute;left:3800px;top:972px;width:28px;height:4px;background:#e5c73b;"></div>
<div style="position:absolute;left:3800px;top:1040px;width:28px;height:4px;background:#e5c73b;"></div>
<div style="position:absolute;left:3800px;top:1058px;width:28px;height:4px;background:#e5c73b;"></div>
<div style="position:absolute;left:3800px;top:1082px;width:28px;height:4px;background:#6aa7dc;"></div>
<div style="position:absolute;left:3800px;top:1120px;width:28px;height:4px;background:#e5c73b;"></div>
<div style="position:absolute;left:3800px;top:1126px;width:28px;height:4px;background:#e5c73b;"></div>
<div style="position:absolute;left:3800px;top:1165px;width:28px;height:4px;background:#6aa7dc;"></div>
<div style="position:absolute;left:3800px;top:1213px;width:28px;height:4px;background:#6aa7dc;"></div>
<div style="position:absolute;left:3800px;top:1270px;width:28px;height:11px;background:#e5c73b;"></div>
<div style="position:absolute;left:3800px;top:1338px;width:28px;height:4px;background:#6aa7dc;"></div>
<div style="position:absolute;left:3800px;top:1419px;width:28px;height:10px;background:#e5c73b;"></div>
<div style="position:absolute;left:3800px;top:1460px;width:28px;height:4px;background:#234a96;"></div>
<div style="position:absolute;left:3800px;top:1620px;width:28px;height:4px;background:#e5c73b;"></div>
<div style="position:absolute;left:3800px;top:1628px;width:28px;height:4px;background:#e5c73b;"></div>
<div style="position:absolute;left:3800px;top:1636px;width:28px;height:4px;background:#e5c73b;"></div>
<div style="position:absolute;left:3800px;top:1730px;width:28px;height:10px;background:#e5c73b;"></div>
<div style="position:absolute;left:3800px;top:1751px;width:28px;height:4px;background:#6aa7dc;"></div>
<div style="position:absolute;left:3800px;top:1825px;width:28px;height:4px;background:#e5c73b;"></div>
<div style="position:absolute;left:3800px;top:1862px;width:28px;height:4px;background:#e5c73b;"></div>
<div style="position:absolute;left:3800px;top:1868px;width:28px;height:4px;background:#e5c73b;"></div>
<div style="position:absolute;left:3800px;top:1896px;width:28px;height:5px;background:#e5c73b;"></div>
<div style="position:absolute;left:3800px;top:1925px;width:28px;height:4px;background:#e5c73b;"></div>
<div style="position:absolute;left:3800px;top:1937px;width:28px;height:4px;background:#e5c73b;"></div>
<div style="position:absolute;left:3808px;top:1429px;width:14px;height:63px;background:rgba(100,100,100,0.8);border-radius:7px;"></div>
<svg style="position:absolute;left:3600px;top:173px;" width="26" height="24" viewBox="0 0 26 24"><path d="M13,1 L25,23 H1 Z" fill="#e5c73b"/><path d="M13,8 V16 M13,18 V21" stroke="#fff" stroke-width="3"/></svg>
<div style="position:absolute;left:3630px;top:172.6px;height:29.9px;line-height:29.9px;font-family:'Liberation Sans',sans-serif;font-size:23px;color:#777777;font-weight:400;font-style:normal;letter-spacing:2.406px;white-space:pre;-webkit-text-stroke:0.5px #777777;">38</div>
<svg style="position:absolute;left:3672px;top:170px;" width="26" height="30" viewBox="0 0 26 30"><path d="M3,14 L10,21 L23,5" stroke="#5c9e5c" stroke-width="5" fill="none"/><path d="M2,27 L6,23 L10,27 L14,23 L18,27 L22,23" stroke="#5c9e5c" stroke-width="1.5" fill="none"/></svg>
<div style="position:absolute;left:3705px;top:172.6px;height:29.9px;line-height:29.9px;font-family:'Liberation Sans',sans-serif;font-size:23px;color:#777777;font-weight:400;font-style:normal;letter-spacing:-0.594px;white-space:pre;-webkit-text-stroke:0.5px #777777;">12</div>
<svg style="position:absolute;left:3752px;top:176px;" width="20" height="14" viewBox="0 0 20 14"><path d="M2,12 L10,3 L18,12" stroke="#777777" stroke-width="2.5" fill="none"/></svg>
<svg style="position:absolute;left:3794px;top:178px;" width="20" height="14" viewBox="0 0 20 14"><path d="M2,2 L10,11 L18,2" stroke="#777777" stroke-width="2.5" fill="none"/></svg>
<div style="position:absolute;left:2924px;top:160px;width:2px;height:1871px;background:#e4e4e4;"></div>
<div style="position:absolute;left:29px;top:160px;width:781px;height:1871px;overflow:hidden"><div style="position:absolute;left:-29px;top:-160px;width:810px;height:2100px"><svg style="position:absolute;left:43.599999999999994px;top:172px;" width="20" height="14" viewBox="0 0 20 14"><path d="M2,3 L10,11 L18,3" stroke="#7a7a7a" stroke-width="2.6" fill="none"/></svg><svg style="position:absolute;left:79.6px;top:166px;" width="32" height="32" viewBox="0 0 32 32"><path d="M0,4 H10 L14,8 H28 V26 H0 Z" fill="#afb6bd"/><rect x="17" y="19" width="13" height="13" fill="#fff"/><rect x="18" y="20" width="12" height="12" fill="#5fb0dc"/></svg><div style="position:absolute;left:116.6px;top:164.6px;height:33.8px;line-height:33.8px;font-family:'Liberation Sans',sans-serif;font-size:26px;color:#000;font-weight:700;font-style:normal;letter-spacing:1.150px;white-space:pre;-webkit-text-stroke:0.5px #000;">tomcat</div><div style="position:absolute;left:221px;top:164.6px;height:33.8px;line-height:33.8px;font-family:'Liberation Sans',sans-serif;font-size:26px;color:#8c8c8c;font-weight:400;font-style:normal;letter-spacing:2.299px;white-space:pre;-webkit-text-stroke:0.5px #8c8c8c;">~/gitlab/tomcat</div><svg style="position:absolute;left:80.6px;top:211px;" width="14" height="20" viewBox="0 0 14 20"><path d="M3,2 L11,10 L3,18" stroke="#7a7a7a" stroke-width="2.6" fill="none"/></svg><svg style="position:absolute;left:115.6px;top:206px;" width="32" height="32" viewBox="0 0 32 32"><path d="M0,4 H10 L14,8 H28 V26 H0 Z" fill="#afb6bd"/></svg><div style="position:absolute;left:152.6px;top:204.6px;height:33.8px;line-height:33.8px;font-family:'Liberation Sans',sans-serif;font-size:26px;color:#000;font-weight:400;font-style:normal;letter-spacing:1.152px;white-space:pre;-webkit-text-stroke:0.5px #000;">.idea</div><svg style="position:absolute;left:80.6px;top:251px;" width="14" height="20" viewBox="0 0 14 20"><path d="M3,2 L11,10 L3,18" stroke="#7a7a7a" stroke-width="2.6" fill="none"/></svg><svg style="position:absolute;left:115.6px;top:246px;" width="32" height="32" viewBox="0 0 32 32"><path d="M0,4 H10 L14,8 H28 V26 H0 Z" fill="#afb6bd"/></svg><div style="position:absolute;left:152.6px;top:244.6px;height:33.8px;line-height:33.8px;font-family:'Liberation Sans',sans-serif;font-size:26px;color:#000;font-weight:400;font-style:normal;letter-spacing:1.271px;white-space:pre;-webkit-text-stroke:0.5px #000;">.settings</div><svg style="position:absolute;left:80.6px;top:291px;" width="14" height="20" viewBox="0 0 14 20"><path d="M3,2 L11,10 L3,18" stroke="#7a7a7a" stroke-width="2.6" fill="none"/></svg><svg style="position:absolute;left:115.6px;top:286px;" width="32" height="32" viewBox="0 0 32 32"><path d="M0,4 H10 L14,8 H28 V26 H0 Z" fill="#afb6bd"/></svg><div style="position:absolute;left:152.6px;top:284.6px;height:33.8px;line-height:33.8px;font-family:'Liberation Sans',sans-serif;font-size:26px;color:#000;font-weight:400;font-style:normal;letter-spacing:2.148px;white-space:pre;-webkit-text-stroke:0.5px #000;">bin</div><svg style="position:absolute;left:79.6px;top:332px;" width="20" height="14" viewBox="0 0 20 14"><path d="M2,3 L10,11 L18,3" stroke="#7a7a7a" stroke-width="2.6" fill="none"/></svg><svg style="position:absolute;left:115.6px;top:326px;" width="32" height="32" viewBox="0 0 32 32"><path d="M0,4 H10 L14,8 H28 V26 H0 Z" fill="#afb6bd"/></svg><div style="position:absolute;left:152.6px;top:324.6px;height:33.8px;line-height:33.8px;font-family:'Liberation Sans',sans-serif;font-size:26px;color:#000;font-weight:400;font-style:normal;letter-spacing:1.448px;white-space:pre;-webkit-text-stroke:0.5px #000;">conf</div><svg style="position:absolute;left:115.6px;top:372px;" width="20" height="14" viewBox="0 0 20 14"><path d="M2,3 L10,11 L18,3" stroke="#7a7a7a" stroke-width="2.6" fill="none"/></svg><svg style="position:absolute;left:151.6px;top:366px;" width="32" height="32" viewBox="0 0 32 32"><path d="M0,4 H10 L14,8 H28 V26 H0 Z" fill="#afb6bd"/></svg><div style="position:absolute;left:188.6px;top:364.6px;height:33.8px;line-height:33.8px;font-family:'Liberation Sans',sans-serif;font-size:26px;color:#000;font-weight:400;font-style:normal;letter-spacing:0.728px;white-space:pre;-webkit-text-stroke:0.5px #000;">Catalina</div><svg style="position:absolute;left:187.6px;top:406px;" width="32" height="32" viewBox="0 0 32 32"><path d="M0,4 H10 L14,8 H28 V26 H0 Z" fill="#afb6bd"/></svg><div style="position:absolute;left:224.6px;top:404.6px;height:33.8px;line-height:33.8px;font-family:'Liberation Sans',sans-serif;font-size:26px;color:#000;font-weight:400;font-style:normal;letter-spacing:1.297px;white-space:pre;-webkit-text-stroke:0.5px #000;">localhost</div><svg style="position:absolute;left:152.6px;top:445px;" width="32" height="32" viewBox="0 0 32 32"><path d="M3.4,8.8 L11.1,1.1 V8.8 Z" fill="#afb6bd"/><path d="M13.5,1.1 H23.3 V28.7 H3.4 V11 H13.5 Z" fill="#afb6bd"/><path d="M7.5,14 H19.3 M7.5,18 H19.3 M7.5,22 H15.4" stroke="#3c3f41" stroke-width="1.8"/></svg><div style="position:absolute;left:188.6px;top:444.6px;height:33.8px;line-height:33.8px;font-family:'Liberation Sans',sans-serif;font-size:26px;color:#000;font-weight:400;font-style:normal;letter-spacing:1.156px;white-space:pre;-webkit-text-stroke:0.5px #000;">catalina.policy</div><svg style="position:absolute;left:152.6px;top:485px;" width="32" height="32" viewBox="0 0 32 32"><path d="M3.4,8.8 L11.1,1.1 V8.8 Z" fill="#afb6bd"/><path d="M13.5,1.1 H23.3 V14.7 H17.8 V18.7 H11.1 V28.8 H3.4 V11.2 H13.5 Z" fill="#afb6bd"/><rect x="13.5" y="21" width="3.9" height="9.7" fill="#e26b32"/><rect x="19.6" y="17" width="3.7" height="13.7" fill="#eab23f"/><rect x="25.4" y="13" width="3.9" height="17.7" fill="#5fb443"/></svg><div style="position:absolute;left:188.6px;top:484.6px;height:33.8px;line-height:33.8px;font-family:'Liberation Sans',sans-serif;font-size:26px;color:#000;font-weight:400;font-style:normal;letter-spacing:1.141px;white-space:pre;-webkit-text-stroke:0.5px #000;">catalina.properties</div><svg style="position:absolute;left:152.6px;top:525px;" width="32" height="32" viewBox="0 0 32 32"><path d="M3.4,8.8 L11.1,1.1 V8.8 Z" fill="#afb6bd"/><path d="M13.5,1.1 H23.3 V14.8 H3.4 V11 H13.5 Z" fill="#afb6bd"/><rect x="0" y="17.1" width="29.4" height="13.8" fill="#e8956b"/><path d="M10,19.5 L4.5,24 L10,28.5 M14.5,19.5 L20,24 L14.5,28.5" stroke="#3c3230" stroke-width="1.9" fill="none"/></svg><div style="position:absolute;left:188.6px;top:524.6px;height:33.8px;line-height:33.8px;font-family:'Liberation Sans',sans-serif;font-size:26px;color:#000;font-weight:400;font-style:normal;letter-spacing:1.880px;white-space:pre;-webkit-text-stroke:0.5px #000;">context.xml</div><svg style="position:absolute;left:152.6px;top:565px;" width="32" height="32" viewBox="0 0 32 32"><path d="M3.4,8.8 L11.1,1.1 V8.8 Z" fill="#afb6bd"/><path d="M13.5,1.1 H23.3 V28.7 H3.4 V11 H13.5 Z" fill="#afb6bd"/><path d="M7.5,14 H19.3 M7.5,18 H19.3 M7.5,22 H15.4" stroke="#3c3f41" stroke-width="1.8"/></svg><div style="position:absolute;left:188.6px;top:564.6px;height:33.8px;line-height:33.8px;font-family:'Liberation Sans',sans-serif;font-size:26px;color:#000;font-weight:400;font-style:normal;letter-spacing:1.799px;white-space:pre;-webkit-text-stroke:0.5px #000;">hello.txt</div><svg style="position:absolute;left:152.6px;top:605px;" width="32" height="32" viewBox="0 0 32 32"><path d="M3.4,8.8 L11.1,1.1 V8.8 Z" fill="#afb6bd"/><path d="M13.5,1.1 H23.3 V14.7 H17.8 V18.7 H11.1 V28.8 H3.4 V11.2 H13.5 Z" fill="#afb6bd"/><rect x="13.5" y="21" width="3.9" height="9.7" fill="#e26b32"/><rect x="19.6" y="17" width="3.7" height="13.7" fill="#eab23f"/><rect x="25.4" y="13" width="3.9" height="17.7" fill="#5fb443"/></svg><div style="position:absolute;left:188.6px;top:604.6px;height:33.8px;line-height:33.8px;font-family:'Liberation Sans',sans-serif;font-size:26px;color:#000;font-weight:400;font-style:normal;letter-spacing:1.459px;white-space:pre;-webkit-text-stroke:0.5px #000;">logging.properties</div><svg style="position:absolute;left:152.6px;top:645px;" width="32" height="32" viewBox="0 0 32 32"><path d="M3.4,8.8 L11.1,1.1 V8.8 Z" fill="#afb6bd"/><path d="M13.5,1.1 H23.3 V14.8 H3.4 V11 H13.5 Z" fill="#afb6bd"/><rect x="0" y="17.1" width="29.4" height="13.8" fill="#e8956b"/><path d="M10,19.5 L4.5,24 L10,28.5 M14.5,19.5 L20,24 L14.5,28.5" stroke="#3c3230" stroke-width="1.9" fill="none"/></svg><div style="position:absolute;left:188.6px;top:644.6px;height:33.8px;line-height:33.8px;font-family:'Liberation Sans',sans-serif;font-size:26px;color:#2239a5;font-weight:400;font-style:normal;letter-spacing:1.448px;white-space:pre;-webkit-text-stroke:0.5px #2239a5;">server.xml</div><svg style="position:absolute;left:152.6px;top:685px;" width="32" height="32" viewBox="0 0 32 32"><path d="M3.4,8.8 L11.1,1.1 V8.8 Z" fill="#afb6bd"/><path d="M13.5,1.1 H23.3 V14.8 H3.4 V11 H13.5 Z" fill="#afb6bd"/><rect x="0" y="17.1" width="29.4" height="13.8" fill="#e8956b"/><path d="M10,19.5 L4.5,24 L10,28.5 M14.5,19.5 L20,24 L14.5,28.5" stroke="#3c3230" stroke-width="1.9" fill="none"/></svg><div style="position:absolute;left:188.6px;top:684.6px;height:33.8px;line-height:33.8px;font-family:'Liberation Sans',sans-serif;font-size:26px;color:#000;font-weight:400;font-style:normal;letter-spacing:1.805px;white-space:pre;-webkit-text-stroke:0.5px #000;">tomcat-users.xml</div><svg style="position:absolute;left:152.6px;top:725px;" width="32" height="32" viewBox="0 0 32 32"><path d="M3.4,8.8 L11.1,1.1 V8.8 Z" fill="#afb6bd"/><path d="M13.5,1.1 H23.3 V14.8 H3.4 V11 H13.5 Z" fill="#afb6bd"/><rect x="0" y="17.1" width="29.4" height="13.8" fill="#efc87e"/><text x="2" y="29.5" font-family="Liberation Sans" font-size="13" fill="#3c3230" font-weight="bold">XS</text></svg><div style="position:absolute;left:188.6px;top:724.6px;height:33.8px;line-height:33.8px;font-family:'Liberation Sans',sans-serif;font-size:26px;color:#000;font-weight:400;font-style:normal;letter-spacing:1.636px;white-space:pre;-webkit-text-stroke:0.5px #000;">tomcat-users.xsd</div><svg style="position:absolute;left:152.6px;top:765px;" width="32" height="32" viewBox="0 0 32 32"><path d="M3.4,8.8 L11.1,1.1 V8.8 Z" fill="#afb6bd"/><path d="M13.5,1.1 H23.3 V14.8 H3.4 V11 H13.5 Z" fill="#afb6bd"/><rect x="0" y="17.1" width="17" height="13.8" fill="#e8956b"/><path d="M10,19.5 L4.5,24 L10,28.5" stroke="#3c3230" stroke-width="1.9" fill="none"/><circle cx="22.5" cy="24" r="8" fill="#fff"/><circle cx="23" cy="24" r="6.5" fill="#9aa7b0"/><path d="M19,20 Q22,22 21,25 Q24,26 23,30 M25,18.5 Q25,21 28,22" stroke="#fff" stroke-width="1.6" fill="none"/></svg><div style="position:absolute;left:188.6px;top:764.6px;height:33.8px;line-height:33.8px;font-family:'Liberation Sans',sans-serif;font-size:26px;color:#000;font-weight:400;font-style:normal;letter-spacing:1.690px;white-space:pre;-webkit-text-stroke:0.5px #000;">web.xml</div><svg style="position:absolute;left:79.6px;top:812px;" width="20" height="14" viewBox="0 0 20 14"><path d="M2,3 L10,11 L18,3" stroke="#7a7a7a" stroke-width="2.6" fill="none"/></svg><svg style="position:absolute;left:115.6px;top:806px;" width="32" height="32" viewBox="0 0 32 32"><path d="M0,4 H10 L14,8 H28 V26 H0 Z" fill="#9dd0e8"/></svg><div style="position:absolute;left:152.6px;top:804.6px;height:33.8px;line-height:33.8px;font-family:'Liberation Sans',sans-serif;font-size:26px;color:#000;font-weight:400;font-style:normal;letter-spacing:0.599px;white-space:pre;-webkit-text-stroke:0.5px #000;">java</div><svg style="position:absolute;left:115.6px;top:852px;" width="20" height="14" viewBox="0 0 20 14"><path d="M2,3 L10,11 L18,3" stroke="#7a7a7a" stroke-width="2.6" fill="none"/></svg><svg style="position:absolute;left:151.6px;top:846px;" width="32" height="32" viewBox="0 0 32 32"><path d="M0,4 H10 L14,8 H28 V26 H0 Z" fill="#afb6bd"/><circle cx="11" cy="17" r="4" fill="#fff"/></svg><div style="position:absolute;left:188.6px;top:844.6px;height:33.8px;line-height:33.8px;font-family:'Liberation Sans',sans-serif;font-size:26px;color:#000;font-weight:400;font-style:normal;letter-spacing:1.316px;white-space:pre;-webkit-text-stroke:0.5px #000;">com.luban</div><svg style="position:absolute;left:152.6px;top:891px;" width="14" height="20" viewBox="0 0 14 20"><path d="M3,2 L11,10 L3,18" stroke="#7a7a7a" stroke-width="2.6" fill="none"/></svg><svg style="position:absolute;left:187.6px;top:886px;" width="32" height="32" viewBox="0 0 32 32"><path d="M0,4 H10 L14,8 H28 V26 H0 Z" fill="#afb6bd"/><circle cx="11" cy="17" r="4" fill="#fff"/></svg><div style="position:absolute;left:224.6px;top:884.6px;height:33.8px;line-height:33.8px;font-family:'Liberation Sans',sans-serif;font-size:26px;color:#000;font-weight:400;font-style:normal;letter-spacing:1.189px;white-space:pre;-webkit-text-stroke:0.5px #000;">broadcast</div><svg style="position:absolute;left:152.6px;top:931px;" width="14" height="20" viewBox="0 0 14 20"><path d="M3,2 L11,10 L3,18" stroke="#7a7a7a" stroke-width="2.6" fill="none"/></svg><svg style="position:absolute;left:187.6px;top:926px;" width="32" height="32" viewBox="0 0 32 32"><path d="M0,4 H10 L14,8 H28 V26 H0 Z" fill="#afb6bd"/><circle cx="11" cy="17" r="4" fill="#fff"/></svg><div style="position:absolute;left:224.6px;top:924.6px;height:33.8px;line-height:33.8px;font-family:'Liberation Sans',sans-serif;font-size:26px;color:#000;font-weight:400;font-style:normal;letter-spacing:1.041px;white-space:pre;-webkit-text-stroke:0.5px #000;">classloadertest</div><svg style="position:absolute;left:152.6px;top:971px;" width="14" height="20" viewBox="0 0 14 20"><path d="M3,2 L11,10 L3,18" stroke="#7a7a7a" stroke-width="2.6" fill="none"/></svg><svg style="position:absolute;left:187.6px;top:966px;" width="32" height="32" viewBox="0 0 32 32"><path d="M0,4 H10 L14,8 H28 V26 H0 Z" fill="#afb6bd"/><circle cx="11" cy="17" r="4" fill="#fff"/></svg><div style="position:absolute;left:224.6px;top:964.6px;height:33.8px;line-height:33.8px;font-family:'Liberation Sans',sans-serif;font-size:26px;color:#000;font-weight:400;font-style:normal;letter-spacing:1.032px;white-space:pre;-webkit-text-stroke:0.5px #000;">classloadtest</div><svg style="position:absolute;left:152.6px;top:1011px;" width="14" height="20" viewBox="0 0 14 20"><path d="M3,2 L11,10 L3,18" stroke="#7a7a7a" stroke-width="2.6" fill="none"/></svg><svg style="position:absolute;left:187.6px;top:1006px;" width="32" height="32" viewBox="0 0 32 32"><path d="M0,4 H10 L14,8 H28 V26 H0 Z" fill="#afb6bd"/><circle cx="11" cy="17" r="4" fill="#fff"/></svg><div style="position:absolute;left:224.6px;top:1004.6px;height:33.8px;line-height:33.8px;font-family:'Liberation Sans',sans-serif;font-size:26px;color:#000;font-weight:400;font-style:normal;letter-spacing:1.656px;white-space:pre;-webkit-text-stroke:0.5px #000;">compilerx</div><svg style="position:absolute;left:152.6px;top:1051px;" width="14" height="20" viewBox="0 0 14 20"><path d="M3,2 L11,10 L3,18" stroke="#7a7a7a" stroke-width="2.6" fill="none"/></svg><svg style="position:absolute;left:187.6px;top:1046px;" width="32" height="32" viewBox="0 0 32 32"><path d="M0,4 H10 L14,8 H28 V26 H0 Z" fill="#afb6bd"/><circle cx="11" cy="17" r="4" fill="#fff"/></svg><div style="position:absolute;left:224.6px;top:1044.6px;height:33.8px;line-height:33.8px;font-family:'Liberation Sans',sans-serif;font-size:26px;color:#000;font-weight:400;font-style:normal;letter-spacing:1.562px;white-space:pre;-webkit-text-stroke:0.5px #000;">digesterx</div><svg style="position:absolute;left:152.6px;top:1091px;" width="14" height="20" viewBox="0 0 14 20"><path d="M3,2 L11,10 L3,18" stroke="#7a7a7a" stroke-width="2.6" fill="none"/></svg><svg style="position:absolute;left:187.6px;top:1086px;" width="32" height="32" viewBox="0 0 32 32"><path d="M0,4 H10 L14,8 H28 V26 H0 Z" fill="#afb6bd"/><circle cx="11" cy="17" r="4" fill="#fff"/></svg><div style="position:absolute;left:224.6px;top:1084.6px;height:33.8px;line-height:33.8px;font-family:'Liberation Sans',sans-serif;font-size:26px;color:#000;font-weight:400;font-style:normal;letter-spacing:1.915px;white-space:pre;-webkit-text-stroke:0.5px #000;">filter</div><svg style="position:absolute;left:152.6px;top:1131px;" width="14" height="20" viewBox="0 0 14 20"><path d="M3,2 L11,10 L3,18" stroke="#7a7a7a" stroke-width="2.6" fill="none"/></svg><svg style="position:absolute;left:187.6px;top:1126px;" width="32" height="32" viewBox="0 0 32 32"><path d="M0,4 H10 L14,8 H28 V26 H0 Z" fill="#afb6bd"/><circle cx="11" cy="17" r="4" fill="#fff"/></svg><div style="position:absolute;left:224.6px;top:1124.6px;height:33.8px;line-height:33.8px;font-family:'Liberation Sans',sans-serif;font-size:26px;color:#000;font-weight:400;font-style:normal;letter-spacing:1.432px;white-space:pre;-webkit-text-stroke:0.5px #000;">group.send</div><svg style="position:absolute;left:152.6px;top:1171px;" width="14" height="20" viewBox="0 0 14 20"><path d="M3,2 L11,10 L3,18" stroke="#7a7a7a" stroke-width="2.6" fill="none"/></svg><svg style="position:absolute;left:187.6px;top:1166px;" width="32" height="32" viewBox="0 0 32 32"><path d="M0,4 H10 L14,8 H28 V26 H0 Z" fill="#afb6bd"/><circle cx="11" cy="17" r="4" fill="#fff"/></svg><div style="position:absolute;left:224.6px;top:1164.6px;height:33.8px;line-height:33.8px;font-family:'Liberation Sans',sans-serif;font-size:26px;color:#000;font-weight:400;font-style:normal;letter-spacing:1.664px;white-space:pre;-webkit-text-stroke:0.5px #000;">naming</div><svg style="position:absolute;left:152.6px;top:1211px;" width="14" height="20" viewBox="0 0 14 20"><path d="M3,2 L11,10 L3,18" stroke="#7a7a7a" stroke-width="2.6" fill="none"/></svg><svg style="position:absolute;left:187.6px;top:1206px;" width="32" height="32" viewBox="0 0 32 32"><path d="M0,4 H10 L14,8 H28 V26 H0 Z" fill="#afb6bd"/><circle cx="11" cy="17" r="4" fill="#fff"/></svg><div style="position:absolute;left:224.6px;top:1204.6px;height:33.8px;line-height:33.8px;font-family:'Liberation Sans',sans-serif;font-size:26px;color:#000;font-weight:400;font-style:normal;letter-spacing:1.848px;white-space:pre;-webkit-text-stroke:0.5px #000;">nio</div><svg style="position:absolute;left:152.6px;top:1251px;" width="14" height="20" viewBox="0 0 14 20"><path d="M3,2 L11,10 L3,18" stroke="#7a7a7a" stroke-width="2.6" fill="none"/></svg><svg style="position:absolute;left:187.6px;top:1246px;" width="32" height="32" viewBox="0 0 32 32"><path d="M0,4 H10 L14,8 H28 V26 H0 Z" fill="#afb6bd"/><circle cx="11" cy="17" r="4" fill="#fff"/></svg><div style="position:absolute;left:224.6px;top:1244.6px;height:33.8px;line-height:33.8px;font-family:'Liberation Sans',sans-serif;font-size:26px;color:#000;font-weight:400;font-style:normal;letter-spacing:1.848px;white-space:pre;-webkit-text-stroke:0.5px #000;">nio1</div><svg style="position:absolute;left:152.6px;top:1291px;" width="14" height="20" viewBox="0 0 14 20"><path d="M3,2 L11,10 L3,18" stroke="#7a7a7a" stroke-width="2.6" fill="none"/></svg><svg style="position:absolute;left:187.6px;top:1286px;" width="32" height="32" viewBox="0 0 32 32"><path d="M0,4 H10 L14,8 H28 V26 H0 Z" fill="#afb6bd"/><circle cx="11" cy="17" r="4" fill="#fff"/></svg><div style="position:absolute;left:224.6px;top:1284.6px;height:33.8px;line-height:33.8px;font-family:'Liberation Sans',sans-serif;font-size:26px;color:#000;font-weight:400;font-style:normal;letter-spacing:1.848px;white-space:pre;-webkit-text-stroke:0.5px #000;">pool</div><svg style="position:absolute;left:152.6px;top:1331px;" width="14" height="20" viewBox="0 0 14 20"><path d="M3,2 L11,10 L3,18" stroke="#7a7a7a" stroke-width="2.6" fill="none"/></svg><svg style="position:absolute;left:187.6px;top:1326px;" width="32" height="32" viewBox="0 0 32 32"><path d="M0,4 H10 L14,8 H28 V26 H0 Z" fill="#afb6bd"/><circle cx="11" cy="17" r="4" fill="#fff"/></svg><div style="position:absolute;left:224.6px;top:1324.6px;height:33.8px;line-height:33.8px;font-family:'Liberation Sans',sans-serif;font-size:26px;color:#000;font-weight:400;font-style:normal;letter-spacing:1.269px;white-space:pre;-webkit-text-stroke:0.5px #000;">socket</div><svg style="position:absolute;left:152.6px;top:1371px;" width="14" height="20" viewBox="0 0 14 20"><path d="M3,2 L11,10 L3,18" stroke="#7a7a7a" stroke-width="2.6" fill="none"/></svg><svg style="position:absolute;left:187.6px;top:1366px;" width="32" height="32" viewBox="0 0 32 32"><path d="M0,4 H10 L14,8 H28 V26 H0 Z" fill="#afb6bd"/><circle cx="11" cy="17" r="4" fill="#fff"/></svg><div style="position:absolute;left:224.6px;top:1364.6px;height:33.8px;line-height:33.8px;font-family:'Liberation Sans',sans-serif;font-size:26px;color:#000;font-weight:400;font-style:normal;letter-spacing:1.649px;white-space:pre;-webkit-text-stroke:0.5px #000;">transformlet</div><svg style="position:absolute;left:186.6px;top:1404px;" width="32" height="32" viewBox="0 0 32 32"><circle cx="14" cy="16" r="14" fill="#9ccde8"/><path d="M18,12.4 A5.4,5.4 0 1 0 18,19.6" stroke="#3c3f41" stroke-width="2.2" fill="none"/></svg><div style="position:absolute;left:224.6px;top:1404.6px;height:33.8px;line-height:33.8px;font-family:'Liberation Sans',sans-serif;font-size:26px;color:#000;font-weight:400;font-style:normal;letter-spacing:0.494px;white-space:pre;-webkit-text-stroke:0.5px #000;">BasicValue</div><svg style="position:absolute;left:186.6px;top:1444px;" width="32" height="32" viewBox="0 0 32 32"><circle cx="14" cy="16" r="14" fill="#9ccde8"/><path d="M18,12.4 A5.4,5.4 0 1 0 18,19.6" stroke="#3c3f41" stroke-width="2.2" fill="none"/></svg><div style="position:absolute;left:224.6px;top:1444.6px;height:33.8px;line-height:33.8px;font-family:'Liberation Sans',sans-serif;font-size:26px;color:#000;font-weight:400;font-style:normal;letter-spacing:1.154px;white-space:pre;-webkit-text-stroke:0.5px #000;">BeforeContextInitializedContainerListener</div><svg style="position:absolute;left:186.6px;top:1484px;" width="32" height="32" viewBox="0 0 32 32"><circle cx="14" cy="16" r="14" fill="#9ccde8"/><path d="M18,12.4 A5.4,5.4 0 1 0 18,19.6" stroke="#3c3f41" stroke-width="2.2" fill="none"/><path d="M21,0 L31,7 L21,13 Z" fill="#5fb443"/></svg><div style="position:absolute;left:224.6px;top:1484.6px;height:33.8px;line-height:33.8px;font-family:'Liberation Sans',sans-serif;font-size:26px;color:#000;font-weight:400;font-style:normal;letter-spacing:0.984px;white-space:pre;-webkit-text-stroke:0.5px #000;">ByteBufferTest</div><svg style="position:absolute;left:186.6px;top:1524px;" width="32" height="32" viewBox="0 0 32 32"><circle cx="14" cy="16" r="14" fill="#9ccde8"/><path d="M18,12.4 A5.4,5.4 0 1 0 18,19.6" stroke="#3c3f41" stroke-width="2.2" fill="none"/></svg><div style="position:absolute;left:224.6px;top:1524.6px;height:33.8px;line-height:33.8px;font-family:'Liberation Sans',sans-serif;font-size:26px;color:#000;font-weight:400;font-style:normal;letter-spacing:0.490px;white-space:pre;-webkit-text-stroke:0.5px #000;">ClassReaderUtils</div><svg style="position:absolute;left:186.6px;top:1564px;" width="32" height="32" viewBox="0 0 32 32"><circle cx="14" cy="16" r="14" fill="#9ccde8"/><path d="M18,12.4 A5.4,5.4 0 1 0 18,19.6" stroke="#3c3f41" stroke-width="2.2" fill="none"/></svg><div style="position:absolute;left:224.6px;top:1564.6px;height:33.8px;line-height:33.8px;font-family:'Liberation Sans',sans-serif;font-size:26px;color:#000;font-weight:400;font-style:normal;letter-spacing:0.599px;white-space:pre;-webkit-text-stroke:0.5px #000;">DataSourceClassListener</div><svg style="position:absolute;left:186.6px;top:1604px;" width="32" height="32" viewBox="0 0 32 32"><circle cx="14" cy="16" r="14" fill="#9ccde8"/><path d="M18,12.4 A5.4,5.4 0 1 0 18,19.6" stroke="#3c3f41" stroke-width="2.2" fill="none"/></svg><div style="position:absolute;left:224.6px;top:1604.6px;height:33.8px;line-height:33.8px;font-family:'Liberation Sans',sans-serif;font-size:26px;color:#2239a5;font-weight:400;font-style:normal;letter-spacing:0.743px;white-space:pre;-webkit-text-stroke:0.5px #2239a5;">DataSourceFiledListener</div><svg style="position:absolute;left:186.6px;top:1644px;" width="32" height="32" viewBox="0 0 32 32"><circle cx="14" cy="16" r="14" fill="#9ccde8"/><path d="M18,12.4 A5.4,5.4 0 1 0 18,19.6" stroke="#3c3f41" stroke-width="2.2" fill="none"/></svg><div style="position:absolute;left:224.6px;top:1644.6px;height:33.8px;line-height:33.8px;font-family:'Liberation Sans',sans-serif;font-size:26px;color:#000;font-weight:400;font-style:normal;letter-spacing:0.907px;white-space:pre;-webkit-text-stroke:0.5px #000;">DataSourceMethodListener</div><svg style="position:absolute;left:186.6px;top:1684px;" width="32" height="32" viewBox="0 0 32 32"><circle cx="14" cy="16" r="14" fill="#9ccde8"/><path d="M18,12.4 A5.4,5.4 0 1 0 18,19.6" stroke="#3c3f41" stroke-width="2.2" fill="none"/><path d="M21,0 L31,7 L21,13 Z" fill="#5fb443"/></svg><div style="position:absolute;left:224.6px;top:1684.6px;height:33.8px;line-height:33.8px;font-family:'Liberation Sans',sans-serif;font-size:26px;color:#000;font-weight:400;font-style:normal;letter-spacing:0.787px;white-space:pre;-webkit-text-stroke:0.5px #000;">ELTest</div><svg style="position:absolute;left:186.6px;top:1724px;" width="32" height="32" viewBox="0 0 32 32"><circle cx="14" cy="16" r="14" fill="#9ccde8"/><path d="M18,12.4 A5.4,5.4 0 1 0 18,19.6" stroke="#3c3f41" stroke-width="2.2" fill="none"/><path d="M21,0 L31,7 L21,13 Z" fill="#5fb443"/></svg><div style="position:absolute;left:224.6px;top:1724.6px;height:33.8px;line-height:33.8px;font-family:'Liberation Sans',sans-serif;font-size:26px;color:#000;font-weight:400;font-style:normal;letter-spacing:0.831px;white-space:pre;-webkit-text-stroke:0.5px #000;">ELTest1</div><svg style="position:absolute;left:186.6px;top:1764px;" width="32" height="32" viewBox="0 0 32 32"><circle cx="14" cy="16" r="14" fill="#9ccde8"/><path d="M18,12.4 A5.4,5.4 0 1 0 18,19.6" stroke="#3c3f41" stroke-width="2.2" fill="none"/><path d="M21,0 L31,7 L21,13 Z" fill="#5fb443"/></svg><div style="position:absolute;left:224.6px;top:1764.6px;height:33.8px;line-height:33.8px;font-family:'Liberation Sans',sans-serif;font-size:26px;color:#000;font-weight:400;font-style:normal;letter-spacing:0.831px;white-space:pre;-webkit-text-stroke:0.5px #000;">ELTest2</div><svg style="position:absolute;left:186.6px;top:1804px;" width="32" height="32" viewBox="0 0 32 32"><circle cx="14" cy="16" r="14" fill="#9ccde8"/><path d="M18,12.4 A5.4,5.4 0 1 0 18,19.6" stroke="#3c3f41" stroke-width="2.2" fill="none"/><path d="M21,0 L31,7 L21,13 Z" fill="#5fb443"/></svg><div style="position:absolute;left:224.6px;top:1804.6px;height:33.8px;line-height:33.8px;font-family:'Liberation Sans',sans-serif;font-size:26px;color:#000;font-weight:400;font-style:normal;letter-spacing:0.831px;white-space:pre;-webkit-text-stroke:0.5px #000;">ELTest3</div><svg style="position:absolute;left:186.6px;top:1844px;" width="32" height="32" viewBox="0 0 32 32"><circle cx="14" cy="16" r="14" fill="#9ccde8"/><path d="M18,12.4 A5.4,5.4 0 1 0 18,19.6" stroke="#3c3f41" stroke-width="2.2" fill="none"/><path d="M21,0 L31,7 L21,13 Z" fill="#5fb443"/></svg><div style="position:absolute;left:224.6px;top:1844.6px;height:33.8px;line-height:33.8px;font-family:'Liberation Sans',sans-serif;font-size:26px;color:#000;font-weight:400;font-style:normal;letter-spacing:0.831px;white-space:pre;-webkit-text-stroke:0.5px #000;">ELTest4</div><svg style="position:absolute;left:186.6px;top:1884px;" width="32" height="32" viewBox="0 0 32 32"><circle cx="14" cy="16" r="14" fill="#9ccde8"/><path d="M18,12.4 A5.4,5.4 0 1 0 18,19.6" stroke="#3c3f41" stroke-width="2.2" fill="none"/><path d="M21,0 L31,7 L21,13 Z" fill="#5fb443"/></svg><div style="position:absolute;left:224.6px;top:1884.6px;height:33.8px;line-height:33.8px;font-family:'Liberation Sans',sans-serif;font-size:26px;color:#000;font-weight:400;font-style:normal;letter-spacing:0.831px;white-space:pre;-webkit-text-stroke:0.5px #000;">ELTest5</div><svg style="position:absolute;left:186.6px;top:1924px;" width="32" height="32" viewBox="0 0 32 32"><circle cx="14" cy="16" r="14" fill="#9ccde8"/><path d="M18,12.4 A5.4,5.4 0 1 0 18,19.6" stroke="#3c3f41" stroke-width="2.2" fill="none"/><path d="M21,0 L31,7 L21,13 Z" fill="#5fb443"/></svg><div style="position:absolute;left:224.6px;top:1924.6px;height:33.8px;line-height:33.8px;font-family:'Liberation Sans',sans-serif;font-size:26px;color:#000;font-weight:400;font-style:normal;letter-spacing:0.831px;white-space:pre;-webkit-text-stroke:0.5px #000;">ELTest6</div><svg style="position:absolute;left:186.6px;top:1964px;" width="32" height="32" viewBox="0 0 32 32"><circle cx="14" cy="16" r="14" fill="#9ccde8"/><path d="M18,12.4 A5.4,5.4 0 1 0 18,19.6" stroke="#3c3f41" stroke-width="2.2" fill="none"/><path d="M21,0 L31,7 L21,13 Z" fill="#5fb443"/></svg><div style="position:absolute;left:224.6px;top:1964.6px;height:33.8px;line-height:33.8px;font-family:'Liberation Sans',sans-serif;font-size:26px;color:#000;font-weight:400;font-style:normal;letter-spacing:0.989px;white-space:pre;-webkit-text-stroke:0.5px #000;">ElTest7</div><svg style="position:absolute;left:186.6px;top:2004px;" width="32" height="32" viewBox="0 0 32 32"><circle cx="14" cy="16" r="14" fill="#9ccde8"/><path d="M18,12.4 A5.4,5.4 0 1 0 18,19.6" stroke="#3c3f41" stroke-width="2.2" fill="none"/><path d="M21,0 L31,7 L21,13 Z" fill="#5fb443"/></svg><div style="position:absolute;left:224.6px;top:2004.6px;height:33.8px;line-height:33.8px;font-family:'Liberation Sans',sans-serif;font-size:26px;color:#000;font-weight:400;font-style:normal;letter-spacing:0.732px;white-space:pre;-webkit-text-stroke:0.5px #000;">EscapedTest</div></div></div>
<svg style="position:absolute;left:56px;top:118px;" width="30" height="28" viewBox="0 0 30 28"><rect x="1" y="1" width="28" height="26" fill="#fff" stroke="#a9b0b6" stroke-width="2"/><rect x="4" y="8" width="22" height="16" fill="#9dd0e8"/></svg>
<div style="position:absolute;left:94px;top:119.5px;height:29.9px;line-height:29.9px;font-family:'Liberation Sans',sans-serif;font-size:23px;color:#000;font-weight:400;font-style:normal;letter-spacing:1.234px;white-space:pre;-webkit-text-stroke:0.5px #000;">Project</div>
<svg style="position:absolute;left:200px;top:126px;" width="18" height="12" viewBox="0 0 18 12"><path d="M1,1 H17 L9,10 Z" fill="#777777"/></svg>
<svg style="position:absolute;left:546px;top:116px;" width="32" height="32" viewBox="0 0 32 32"><circle cx="16" cy="16" r="12" stroke="#777777" stroke-width="3" fill="none"/><path d="M16,4 V11 M16,21 V28 M4,16 H11 M21,16 H28" stroke="#777777" stroke-width="3"/></svg>
<svg style="position:absolute;left:598px;top:116px;" width="32" height="32" viewBox="0 0 32 32"><path d="M4,4 H28 M4,28 H28" stroke="#777777" stroke-width="3"/><path d="M10,14 L16,8 L22,14 Z M10,18 L16,24 L22,18 Z" fill="#777777"/></svg>
<svg style="position:absolute;left:650px;top:116px;" width="32" height="32" viewBox="0 0 32 32"><path d="M4,16 H28" stroke="#777777" stroke-width="3"/><path d="M10,4 L16,11 L22,4 Z M10,28 L16,21 L22,28 Z" fill="#777777"/></svg>
<div style="position:absolute;left:698px;top:112px;width:2px;height:40px;background:#d0d0d0;"></div>
<svg style="position:absolute;left:716px;top:116px;" width="32" height="32" viewBox="0 0 32 32"><circle cx="16" cy="16" r="9.62" fill="#777777"/><rect x="13.01" y="3.00" width="5.98" height="7.80" fill="#777777" transform="rotate(0 16 16)"/><rect x="13.01" y="3.00" width="5.98" height="7.80" fill="#777777" transform="rotate(60 16 16)"/><rect x="13.01" y="3.00" width="5.98" height="7.80" fill="#777777" transform="rotate(120 16 16)"/><rect x="13.01" y="3.00" width="5.98" height="7.80" fill="#777777" transform="rotate(180 16 16)"/><rect x="13.01" y="3.00" width="5.98" height="7.80" fill="#777777" transform="rotate(240 16 16)"/><rect x="13.01" y="3.00" width="5.98" height="7.80" fill="#777777" transform="rotate(300 16 16)"/><circle cx="16" cy="16" r="4.55" fill="#f2f2f2"/></svg>
<div style="position:absolute;left:772px;top:130px;width:24px;height:4px;background:#777777;"></div>
<svg style="position:absolute;left:3px;top:9px;" width="26" height="26" viewBox="0 0 26 26"><circle cx="13" cy="13" r="12" fill="#ee6a5f" stroke="#d65a4f" stroke-width="0.8"/></svg>
<svg style="position:absolute;left:43px;top:9px;" width="26" height="26" viewBox="0 0 26 26"><circle cx="13" cy="13" r="12" fill="#f5bd4f" stroke="#d9a440" stroke-width="0.8"/></svg>
<svg style="position:absolute;left:83px;top:9px;" width="26" height="26" viewBox="0 0 26 26"><circle cx="13" cy="13" r="12" fill="#61c454" stroke="#52a843" stroke-width="0.8"/></svg>
<div style="position:absolute;left:1708px;top:6.1px;height:33.8px;line-height:33.8px;font-family:'Liberation Sans',sans-serif;font-size:26px;color:#4b4b4b;font-weight:400;font-style:normal;letter-spacing:0.606px;white-space:pre;-webkit-text-stroke:0.5px #4b4b4b;">tomcat – ApplicationContext.java</div>
<div style="position:absolute;left:12.7px;top:60.9px;height:31.2px;line-height:31.2px;font-family:'Liberation Sans',sans-serif;font-size:24px;color:#000;font-weight:700;font-style:normal;letter-spacing:0.922px;white-space:pre;-webkit-text-stroke:0.5px #000;">tomcat</div>
<div style="position:absolute;left:130px;top:60.9px;height:31.2px;line-height:31.2px;font-family:'Liberation Sans',sans-serif;font-size:24px;color:#000;font-weight:400;font-style:normal;letter-spacing:0.323px;white-space:pre;-webkit-text-stroke:0.5px #000;">java</div>
<div style="position:absolute;left:208px;top:60.9px;height:31.2px;line-height:31.2px;font-family:'Liberation Sans',sans-serif;font-size:24px;color:#000;font-weight:400;font-style:normal;letter-spacing:1.656px;white-space:pre;-webkit-text-stroke:0.5px #000;">org</div>
<div style="position:absolute;left:280px;top:60.9px;height:31.2px;line-height:31.2px;font-family:'Liberation Sans',sans-serif;font-size:24px;color:#000;font-weight:400;font-style:normal;letter-spacing:0.450px;white-space:pre;-webkit-text-stroke:0.5px #000;">apache</div>
<div style="position:absolute;left:394px;top:60.9px;height:31.2px;line-height:31.2px;font-family:'Liberation Sans',sans-serif;font-size:24px;color:#000;font-weight:400;font-style:normal;letter-spacing:0.838px;white-space:pre;-webkit-text-stroke:0.5px #000;">catalina</div>
<div style="position:absolute;left:516px;top:60.9px;height:31.2px;line-height:31.2px;font-family:'Liberation Sans',sans-serif;font-size:24px;color:#000;font-weight:400;font-style:normal;letter-spacing:0.904px;white-space:pre;-webkit-text-stroke:0.5px #000;">core</div>
<svg style="position:absolute;left:106px;top:61px;" width="12" height="32" viewBox="0 0 12 32"><path d="M1.5,1 L10,15.5 L1.5,30" stroke="#b7bcc1" stroke-width="1.8" fill="none"/></svg>
<svg style="position:absolute;left:184px;top:61px;" width="12" height="32" viewBox="0 0 12 32"><path d="M1.5,1 L10,15.5 L1.5,30" stroke="#b7bcc1" stroke-width="1.8" fill="none"/></svg>
<svg style="position:absolute;left:256px;top:61px;" width="12" height="32" viewBox="0 0 12 32"><path d="M1.5,1 L10,15.5 L1.5,30" stroke="#b7bcc1" stroke-width="1.8" fill="none"/></svg>
<svg style="position:absolute;left:368.5px;top:61px;" width="12" height="32" viewBox="0 0 12 32"><path d="M1.5,1 L10,15.5 L1.5,30" stroke="#b7bcc1" stroke-width="1.8" fill="none"/></svg>
<svg style="position:absolute;left:489.5px;top:61px;" width="12" height="32" viewBox="0 0 12 32"><path d="M1.5,1 L10,15.5 L1.5,30" stroke="#b7bcc1" stroke-width="1.8" fill="none"/></svg>
<svg style="position:absolute;left:573px;top:61px;" width="12" height="32" viewBox="0 0 12 32"><path d="M1.5,1 L10,15.5 L1.5,30" stroke="#b7bcc1" stroke-width="1.8" fill="none"/></svg>
<svg style="position:absolute;left:594px;top:63px;" width="28" height="28" viewBox="0 0 28 28"><circle cx="14" cy="14" r="14" fill="#9ccde8"/><path d="M18,10.4 A5.4,5.4 0 1 0 18,17.6" stroke="#3c3f41" stroke-width="2.2" fill="none"/></svg>
<div style="position:absolute;left:630.7px;top:60.9px;height:31.2px;line-height:31.2px;font-family:'Liberation Sans',sans-serif;font-size:24px;color:#000;font-weight:400;font-style:normal;letter-spacing:1.228px;white-space:pre;-webkit-text-stroke:0.5px #000;">ApplicationContext</div>
<svg style="position:absolute;left:2506px;top:62px;" width="34" height="28" viewBox="0 0 34 28"><ellipse cx="21.5" cy="6" rx="4.2" ry="5.5" fill="#777777"/><path d="M18,15 Q30,16 31,22.5 H24 Z" fill="#777777"/><path d="M1.5,27.5 Q1.5,20 10,18 L11,14 Q8.5,11 8.8,7.5 Q9.2,1.5 14,1.5 Q18.8,1.5 19.2,7.5 Q19.5,11 17,14 L18,18 Q26.5,20 26.5,27.5 Z" fill="#777777" stroke="#f2f2f2" stroke-width="1.6"/></svg>
<svg style="position:absolute;left:2542px;top:73px;" width="17" height="10" viewBox="0 0 17 10"><path d="M0,0 H16 L8,9 Z" fill="#777777"/></svg>
<div style="position:absolute;left:2574px;top:56px;width:2px;height:39px;background:#c9c9c9;"></div>
<svg style="position:absolute;left:2590px;top:60px;" width="34" height="32" viewBox="0 0 34 32"><path d="M2,12 L12,2 L18,2 L14,6 L32,25 L27,30 L9,12 L6,16 Z" fill="#65a567"/></svg>
<div style="position:absolute;left:2646px;top:54px;width:211px;height:43px;background:#fff;box-sizing:border-box;border:2px solid #c5c5c5;border-radius:7px;"></div>
<svg style="position:absolute;left:2664px;top:60px;" width="34" height="34" viewBox="0 0 34 34"><path d="M6,3.5 H28.5 V22" stroke="#e3e7ea" stroke-width="3" fill="none"/><rect x="3.5" y="9.5" width="21" height="17" fill="none" stroke="#e3e7ea" stroke-width="3"/><rect x="6.5" y="12.5" width="15.5" height="10" fill="#dfeff8"/><circle cx="28.3" cy="28.1" r="4.8" fill="#64f04c" stroke="#888" stroke-width="1.4"/></svg>
<div style="position:absolute;left:2705px;top:62.5px;height:29.9px;line-height:29.9px;font-family:'Liberation Sans',sans-serif;font-size:23px;color:#000;font-weight:400;font-style:normal;letter-spacing:0.193px;white-space:pre;-webkit-text-stroke:0.5px #000;">Bootstrap</div>
<svg style="position:absolute;left:2821px;top:72px;" width="18" height="11" viewBox="0 0 18 11"><path d="M0,0 H17 L8.5,10 Z" fill="#777777"/></svg>
<svg style="position:absolute;left:2885px;top:63px;" width="22" height="26" viewBox="0 0 22 26"><path d="M1,1 L21,13 L1,25 Z" fill="#62a25f"/></svg>
<svg style="position:absolute;left:2932px;top:60px;" width="34" height="34" viewBox="0 0 34 34"><path d="M7,3 L12,8 M21,3 L16,8" stroke="#62a25f" stroke-width="2.5"/><ellipse cx="14" cy="17" rx="10" ry="12" fill="#62a25f"/><path d="M0,12 H28 M0,19 H28 M0,26 H28" stroke="#62a25f" stroke-width="2.5"/><path d="M9,15 H19 M9,20 H19" stroke="#f2f2f2" stroke-width="2"/><circle cx="27" cy="28" r="5" fill="#59d13f" stroke="#7a7a7a" stroke-width="1.2"/></svg>
<svg style="position:absolute;left:2983px;top:60px;" width="34" height="34" viewBox="0 0 34 34"><path d="M2,4 Q10,0 20,4 V10 H14 V26 L10,30 Q2,24 2,14 Z" fill="#777777"/><path d="M16,16 L31,24 L16,32 Z" fill="#62a25f"/></svg>
<svg style="position:absolute;left:3031px;top:61px;" width="34" height="34" viewBox="0 0 34 34"><path d="M20,26 A12,12 0 1 1 24,10" stroke="#777777" stroke-width="2.6" fill="none"/><path d="M12,6 V13 L9,16" stroke="#777777" stroke-width="2" fill="none"/><path d="M16,13 L30,22 L16,31 Z" fill="#d5545b"/></svg>
<svg style="position:absolute;left:3076px;top:73px;" width="17" height="10" viewBox="0 0 17 10"><path d="M0,0 H16 L8,9 Z" fill="#777777"/></svg>
<svg style="position:absolute;left:3115px;top:63px;" width="22" height="26" viewBox="0 0 22 26"><path d="M1,1 L21,13 L1,25 Z" fill="#c2c2c2"/></svg>
<div style="position:absolute;left:3166px;top:66px;width:20px;height:20px;background:#cf5b5f;"></div>
<div style="position:absolute;left:3208px;top:56px;width:2px;height:39px;background:#c9c9c9;"></div>
<div style="position:absolute;left:3228px;top:62.5px;height:29.9px;line-height:29.9px;font-family:'Liberation Sans',sans-serif;font-size:23px;color:#000;font-weight:400;font-style:normal;letter-spacing:-0.260px;white-space:pre;-webkit-text-stroke:0.5px #000;">Git:</div>
<svg style="position:absolute;left:3290px;top:62px;" width="26" height="26" viewBox="0 0 26 26"><path d="M23,2 L6,19" stroke="#589ed9" stroke-width="3.5"/><path d="M2,8 V24 H18 Z" fill="#589ed9"/></svg>
<svg style="position:absolute;left:3340px;top:62px;" width="30" height="26" viewBox="0 0 30 26"><path d="M2,13 L9,20 L27,2" stroke="#62a25f" stroke-width="4" fill="none"/></svg>
<svg style="position:absolute;left:3392px;top:64px;" width="26" height="26" viewBox="0 0 26 26"><path d="M3,23 L19,7" stroke="#62a25f" stroke-width="3.5"/><path d="M9,2 H24 V17 Z" fill="#62a25f"/></svg>
<svg style="position:absolute;left:3443px;top:61px;" width="30" height="30" viewBox="0 0 30 30"><circle cx="15" cy="15" r="12.5" stroke="#777777" stroke-width="3" fill="none"/><path d="M13,8 V16 L19,20" stroke="#777777" stroke-width="2.5" fill="none"/></svg>
<svg style="position:absolute;left:3496px;top:61px;" width="30" height="28" viewBox="0 0 30 28"><path d="M8,9 H19 Q27,9 27,17 Q27,25 19,25 H10" stroke="#777777" stroke-width="3" fill="none"/><path d="M1,9 L9,1 V17 Z" fill="#777777"/></svg>
<div style="position:absolute;left:3541px;top:56px;width:2px;height:39px;background:#c9c9c9;"></div>
<svg style="position:absolute;left:3560px;top:61px;" width="34" height="30" viewBox="0 0 34 30"><rect x="11" y="1" width="10" height="27" fill="#e7b142"/><path d="M0,6 H6 M23,22 H29" stroke="#3b8ef0" stroke-width="3"/><path d="M5,1 L10,6 L5,11 Z M28,17 L33,22 L28,27 Z" fill="#3b8ef0"/></svg>
<div style="position:absolute;left:3608px;top:56px;width:2px;height:39px;background:#c9c9c9;"></div>
<svg style="position:absolute;left:3625px;top:61px;" width="34" height="32" viewBox="0 0 34 32"><path d="M1,4 H22 M12,0 V4 M5,4 Q11,20 22,22 M18,4 Q14,20 1,22" stroke="#777777" stroke-width="2.8" fill="none"/><path d="M15,29 L22,11 L29,29 M18,23 H26" stroke="#3b8ef0" stroke-width="3.5" fill="none"/></svg>
<svg style="position:absolute;left:3679px;top:61px;" width="32" height="32" viewBox="0 0 32 32"><circle cx="12" cy="12" r="10" stroke="#777777" stroke-width="3.2" fill="none"/><path d="M19,19 L28,28" stroke="#777777" stroke-width="3.6"/></svg>
<svg style="position:absolute;left:3732px;top:61px;" width="28" height="30" viewBox="0 0 28 30"><circle cx="14" cy="14" r="9.62" fill="#777777"/><rect x="11.01" y="1.00" width="5.98" height="7.80" fill="#777777" transform="rotate(0 14 14)"/><rect x="11.01" y="1.00" width="5.98" height="7.80" fill="#777777" transform="rotate(60 14 14)"/><rect x="11.01" y="1.00" width="5.98" height="7.80" fill="#777777" transform="rotate(120 14 14)"/><rect x="11.01" y="1.00" width="5.98" height="7.80" fill="#777777" transform="rotate(180 14 14)"/><rect x="11.01" y="1.00" width="5.98" height="7.80" fill="#777777" transform="rotate(240 14 14)"/><rect x="11.01" y="1.00" width="5.98" height="7.80" fill="#777777" transform="rotate(300 14 14)"/><circle cx="14" cy="14" r="4.55" fill="#f2f2f2"/></svg>
<svg style="position:absolute;left:3782px;top:61px;" width="32" height="30" viewBox="0 0 32 30"><defs><linearGradient id="tb1" x1="0" y1="0" x2="1" y2="1"><stop offset="0" stop-color="#f7f35e"/><stop offset="0.5" stop-color="#5fd1a4"/><stop offset="1" stop-color="#3a8be0"/></linearGradient></defs><path d="M3,1 Q26,4 29,13 Q24,26 6,29 Q-2,15 3,1 Z" fill="url(#tb1)"/><path d="M16,14 H29 Q24,26 6,29 Z" fill="#2a4fb5" opacity="0.85"/></svg>
<div style="position:absolute;left:3322px;top:106px;width:400px;height:52px;background:#ffffff;"></div>
<div style="position:absolute;left:3322px;top:153px;width:400px;height:6px;background:#4a7fcf;"></div>
<div style="position:absolute;left:818px;top:118.0px;height:29.9px;line-height:29.9px;font-family:'Liberation Sans',sans-serif;font-size:23px;color:#3b8a2a;font-weight:400;font-style:normal;letter-spacing:0.180px;white-space:pre;-webkit-text-stroke:0.5px #3b8a2a;">tFound.java</div>
<svg style="position:absolute;left:975px;top:122px;" width="18" height="18" viewBox="0 0 18 18"><path d="M2,2 L16,16 M16,2 L2,16" stroke="#b5b5b5" stroke-width="2"/></svg>
<div style="position:absolute;left:1040.4px;top:118.0px;height:29.9px;line-height:29.9px;font-family:'Liberation Sans',sans-serif;font-size:23px;color:#000;font-weight:400;font-style:normal;letter-spacing:0.206px;white-space:pre;-webkit-text-stroke:0.5px #000;">CharChunk.java</div>
<svg style="position:absolute;left:1242px;top:122px;" width="18" height="18" viewBox="0 0 18 18"><path d="M2,2 L16,16 M16,2 L2,16" stroke="#b5b5b5" stroke-width="2"/></svg>
<svg style="position:absolute;left:1002.4000000000001px;top:118px;" width="28" height="28" viewBox="0 0 28 28"><circle cx="14" cy="14" r="14" fill="#9ccde8"/><path d="M18,10.4 A5.4,5.4 0 1 0 18,17.6" stroke="#3c3f41" stroke-width="2.2" fill="none"/></svg>
<svg style="position:absolute;left:998.4000000000001px;top:114px;" width="12" height="12" viewBox="0 0 12 12"><circle cx="6" cy="6" r="5" fill="#9aa3ab"/></svg>
<div style="position:absolute;left:1307.8px;top:118.0px;height:29.9px;line-height:29.9px;font-family:'Liberation Sans',sans-serif;font-size:23px;color:#000;font-weight:400;font-style:normal;letter-spacing:1.180px;white-space:pre;-webkit-text-stroke:0.5px #000;">conf/web.xml</div>
<svg style="position:absolute;left:1490px;top:122px;" width="18" height="18" viewBox="0 0 18 18"><path d="M2,2 L16,16 M16,2 L2,16" stroke="#b5b5b5" stroke-width="2"/></svg>
<svg style="position:absolute;left:1269.8px;top:115px;" width="32" height="32" viewBox="0 0 32 32"><path d="M8,2 H24 V14 H4 V6 Z" fill="#afb6bd"/><rect x="0" y="16" width="22" height="14" fill="#e8946a"/><path d="M9,19 L5,23 L9,27" stroke="#333" stroke-width="1.8" fill="none"/><circle cx="23" cy="24" r="8" fill="#f2f2f2"/><circle cx="23" cy="24" r="6.5" fill="#9aa3ab"/></svg>
<div style="position:absolute;left:1555.6px;top:118.0px;height:29.9px;line-height:29.9px;font-family:'Liberation Sans',sans-serif;font-size:23px;color:#000;font-weight:400;font-style:normal;letter-spacing:0.618px;white-space:pre;-webkit-text-stroke:0.5px #000;">Tomcat.java</div>
<svg style="position:absolute;left:1718px;top:122px;" width="18" height="18" viewBox="0 0 18 18"><path d="M2,2 L16,16 M16,2 L2,16" stroke="#b5b5b5" stroke-width="2"/></svg>
<svg style="position:absolute;left:1517.6px;top:118px;" width="28" height="28" viewBox="0 0 28 28"><circle cx="14" cy="14" r="14" fill="#9ccde8"/><path d="M18,10.4 A5.4,5.4 0 1 0 18,17.6" stroke="#3c3f41" stroke-width="2.2" fill="none"/></svg>
<div style="position:absolute;left:1783px;top:118.0px;height:29.9px;line-height:29.9px;font-family:'Liberation Sans',sans-serif;font-size:23px;color:#000;font-weight:400;font-style:normal;letter-spacing:-0.226px;white-space:pre;-webkit-text-stroke:0.5px #000;">JspServlet.java</div>
<svg style="position:absolute;left:1970px;top:122px;" width="18" height="18" viewBox="0 0 18 18"><path d="M2,2 L16,16 M16,2 L2,16" stroke="#b5b5b5" stroke-width="2"/></svg>
<svg style="position:absolute;left:1745px;top:118px;" width="28" height="28" viewBox="0 0 28 28"><circle cx="14" cy="14" r="14" fill="#9ccde8"/><path d="M18,10.4 A5.4,5.4 0 1 0 18,17.6" stroke="#3c3f41" stroke-width="2.2" fill="none"/></svg>
<div style="position:absolute;left:2035px;top:118.0px;height:29.9px;line-height:29.9px;font-family:'Liberation Sans',sans-serif;font-size:23px;color:#2239a5;font-weight:400;font-style:normal;letter-spacing:0.400px;white-space:pre;-webkit-text-stroke:0.5px #2239a5;">StandardContext.java</div>
<svg style="position:absolute;left:2298px;top:122px;" width="18" height="18" viewBox="0 0 18 18"><path d="M2,2 L16,16 M16,2 L2,16" stroke="#b5b5b5" stroke-width="2"/></svg>
<svg style="position:absolute;left:1997px;top:118px;" width="28" height="28" viewBox="0 0 28 28"><circle cx="14" cy="14" r="14" fill="#9ccde8"/><path d="M18,10.4 A5.4,5.4 0 1 0 18,17.6" stroke="#3c3f41" stroke-width="2.2" fill="none"/></svg>
<div style="position:absolute;left:2363.7px;top:118.0px;height:29.9px;line-height:29.9px;font-family:'Liberation Sans',sans-serif;font-size:23px;color:#000;font-weight:400;font-style:normal;letter-spacing:-0.178px;white-space:pre;-webkit-text-stroke:0.5px #000;">WebXml.java</div>
<svg style="position:absolute;left:2532px;top:122px;" width="18" height="18" viewBox="0 0 18 18"><path d="M2,2 L16,16 M16,2 L2,16" stroke="#b5b5b5" stroke-width="2"/></svg>
<svg style="position:absolute;left:2325.7px;top:118px;" width="28" height="28" viewBox="0 0 28 28"><circle cx="14" cy="14" r="14" fill="#9ccde8"/><path d="M18,10.4 A5.4,5.4 0 1 0 18,17.6" stroke="#3c3f41" stroke-width="2.2" fill="none"/></svg>
<div style="position:absolute;left:2597.6px;top:118.0px;height:29.9px;line-height:29.9px;font-family:'Liberation Sans',sans-serif;font-size:23px;color:#000;font-weight:400;font-style:normal;letter-spacing:-0.371px;white-space:pre;-webkit-text-stroke:0.5px #000;">WebRuleSet.java</div>
<svg style="position:absolute;left:2804px;top:122px;" width="18" height="18" viewBox="0 0 18 18"><path d="M2,2 L16,16 M16,2 L2,16" stroke="#b5b5b5" stroke-width="2"/></svg>
<svg style="position:absolute;left:2559.6px;top:118px;" width="28" height="28" viewBox="0 0 28 28"><circle cx="14" cy="14" r="14" fill="#9ccde8"/><path d="M18,10.4 A5.4,5.4 0 1 0 18,17.6" stroke="#3c3f41" stroke-width="2.2" fill="none"/></svg>
<div style="position:absolute;left:2871px;top:118.0px;height:29.9px;line-height:29.9px;font-family:'Liberation Sans',sans-serif;font-size:23px;color:#000;font-weight:400;font-style:normal;letter-spacing:0.722px;white-space:pre;-webkit-text-stroke:0.5px #000;">servelet-test-1.0_bak/WEB-INF/web.xml</div>
<svg style="position:absolute;left:3341px;top:122px;" width="18" height="18" viewBox="0 0 18 18"><path d="M2,2 L16,16 M16,2 L2,16" stroke="#b5b5b5" stroke-width="2"/></svg>
<svg style="position:absolute;left:2833px;top:115px;" width="32" height="32" viewBox="0 0 32 32"><path d="M8,2 H24 V14 H4 V6 Z" fill="#afb6bd"/><rect x="0" y="16" width="22" height="14" fill="#e8946a"/><path d="M9,19 L5,23 L9,27" stroke="#333" stroke-width="1.8" fill="none"/><circle cx="23" cy="24" r="8" fill="#f2f2f2"/><circle cx="23" cy="24" r="6.5" fill="#9aa3ab"/></svg>
<svg style="position:absolute;left:3390px;top:118px;" width="28" height="28" viewBox="0 0 28 28"><circle cx="14" cy="14" r="14" fill="#9ccde8"/><path d="M18,10.4 A5.4,5.4 0 1 0 18,17.6" stroke="#3c3f41" stroke-width="2.2" fill="none"/></svg>
<div style="position:absolute;left:3428.5px;top:118.0px;height:29.9px;line-height:29.9px;font-family:'Liberation Sans',sans-serif;font-size:23px;color:#000;font-weight:400;font-style:normal;letter-spacing:0.597px;white-space:pre;-webkit-text-stroke:0.5px #000;">ApplicationContext.java</div>
<svg style="position:absolute;left:3738px;top:122px;" width="24" height="16" viewBox="0 0 24 16"><path d="M2,3 L12,12 L22,3" stroke="#777777" stroke-width="2.8" fill="none"/></svg>
<svg style="position:absolute;left:3796px;top:116px;" width="12" height="30" viewBox="0 0 12 30"><circle cx="6" cy="5" r="3" fill="#777777"/><circle cx="6" cy="15" r="3" fill="#777777"/><circle cx="6" cy="25" r="3" fill="#777777"/></svg>
<div style="position:absolute;left:-141.0px;top:145.25px;width:300px;height:30px;line-height:30px;text-align:center;transform:rotate(-90deg);-webkit-text-stroke-width:0.5px;font-family:'Liberation Sans',sans-serif;font-size:23px;letter-spacing:-0.016px;color:#000;white-space:pre">Project</div>
<div style="position:absolute;left:-141.0px;top:306.25px;width:300px;height:30px;line-height:30px;text-align:center;transform:rotate(-90deg);-webkit-text-stroke-width:0.5px;font-family:'Liberation Sans',sans-serif;font-size:23px;letter-spacing:0.271px;color:#000;white-space:pre">Structure</div>
<div style="position:absolute;left:-141.0px;top:504.75px;width:300px;height:30px;line-height:30px;text-align:center;transform:rotate(-90deg);-webkit-text-stroke-width:0.5px;font-family:'Liberation Sans',sans-serif;font-size:23px;letter-spacing:-0.118px;color:#000;white-space:pre">Pull Requests</div>
<div style="position:absolute;left:-141.0px;top:711.0px;width:300px;height:30px;line-height:30px;text-align:center;transform:rotate(-90deg);-webkit-text-stroke-width:0.5px;font-family:'Liberation Sans',sans-serif;font-size:23px;letter-spacing:-0.272px;color:#000;white-space:pre">Json Parser</div>
<div style="position:absolute;left:-141.0px;top:857.75px;width:300px;height:30px;line-height:30px;text-align:center;transform:rotate(-90deg);-webkit-text-stroke-width:0.5px;font-family:'Liberation Sans',sans-serif;font-size:23px;letter-spacing:-0.567px;color:#000;white-space:pre">Database</div>
<div style="position:absolute;left:-141.0px;top:1018.0px;width:300px;height:30px;line-height:30px;text-align:center;transform:rotate(-90deg);-webkit-text-stroke-width:0.5px;font-family:'Liberation Sans',sans-serif;font-size:23px;letter-spacing:-0.034px;color:#000;white-space:pre">Codota</div>
<div style="position:absolute;left:-141.0px;top:1151.6px;width:300px;height:30px;line-height:30px;text-align:center;transform:rotate(-90deg);-webkit-text-stroke-width:0.5px;font-family:'Liberation Sans',sans-serif;font-size:23px;letter-spacing:-0.166px;color:#000;white-space:pre">Ant</div>
<div style="position:absolute;left:-141.0px;top:1321.85px;width:300px;height:30px;line-height:30px;text-align:center;transform:rotate(-90deg);-webkit-text-stroke-width:0.5px;font-family:'Liberation Sans',sans-serif;font-size:23px;letter-spacing:0.185px;color:#000;white-space:pre">Big Data Tools</div>
<div style="position:absolute;left:-141.0px;top:1493.25px;width:300px;height:30px;line-height:30px;text-align:center;transform:rotate(-90deg);-webkit-text-stroke-width:0.5px;font-family:'Liberation Sans',sans-serif;font-size:23px;letter-spacing:-2.344px;color:#000;white-space:pre">JOL</div>
<div style="position:absolute;left:-141.0px;top:2166.0px;width:300px;height:30px;line-height:30px;text-align:center;transform:rotate(-90deg);-webkit-text-stroke-width:0.5px;font-family:'Liberation Sans',sans-serif;font-size:23px;letter-spacing:0.934px;color:#000;white-space:pre">jclasslib</div>
<div style="position:absolute;left:-141.0px;top:2345.1px;width:300px;height:30px;line-height:30px;text-align:center;transform:rotate(-90deg);-webkit-text-stroke-width:0.5px;font-family:'Liberation Sans',sans-serif;font-size:23px;letter-spacing:-0.006px;color:#000;white-space:pre">Bookmarks</div>
<svg style="position:absolute;left:0px;top:208px;" width="28" height="22" viewBox="0 0 28 22"><path d="M0,2 H8 L11,6 H20 V20 H0 Z" fill="#777777"/></svg>
<svg style="position:absolute;left:0px;top:380px;" width="28" height="22" viewBox="0 0 28 22"><rect x="0" y="10" width="9" height="8" fill="#777777"/><rect x="11" y="1" width="8" height="8" fill="#777777"/><rect x="11" y="11" width="8" height="8" fill="#777777"/></svg>
<svg style="position:absolute;left:0px;top:600px;" width="28" height="22" viewBox="0 0 28 22"><path d="M3,20 V6 M0,9 L3,4 L6,9 M9,4 L16,4 Q19,4 19,8 V20 M14,0 L9,4 L14,8" stroke="#777777" stroke-width="2.5" fill="none"/></svg>
<svg style="position:absolute;left:0px;top:932px;" width="28" height="24" viewBox="0 0 28 24"><ellipse cx="10" cy="4" rx="10" ry="3.5" fill="#777777"/><path d="M0,10 Q10,15 20,10 M0,16 Q10,21 20,16" stroke="#777777" stroke-width="3" fill="none"/></svg>
<svg style="position:absolute;left:0px;top:1082px;" width="28" height="26" viewBox="0 0 28 26"><rect x="0" y="0" width="20" height="24" rx="4" fill="#4fcf8c"/><path d="M4,6 L9,10 L4,14 M10,17 H15" stroke="#fff" stroke-width="2" fill="none"/></svg>
<svg style="position:absolute;left:0px;top:1196px;" width="28" height="24" viewBox="0 0 28 24"><circle cx="10" cy="8" r="4" fill="#777777"/><ellipse cx="10" cy="16" rx="5" ry="6" fill="#777777"/><path d="M0,4 L20,20 M20,4 L0,20 M0,12 H20" stroke="#777777" stroke-width="1.8"/></svg>
<svg style="position:absolute;left:0px;top:1424px;" width="28" height="22" viewBox="0 0 28 22"><path d="M1,2 H8 Q18,2 18,11 Q18,20 8,20 H1 Z" stroke="#777777" stroke-width="4" fill="none"/></svg>
<svg style="position:absolute;left:0px;top:1533px;" width="28" height="28" viewBox="0 0 28 28"><rect x="0" y="2" width="24" height="24" fill="#55b83a"/><rect x="2" y="5" width="12" height="8" fill="#333"/><rect x="2" y="15" width="12" height="8" fill="#333"/><rect x="16" y="5" width="6" height="8" fill="#e8d44a"/><rect x="16" y="15" width="6" height="8" fill="#e8d44a"/></svg>
<svg style="position:absolute;left:0px;top:2233px;" width="28" height="24" viewBox="0 0 28 24"><rect x="0" y="1" width="20" height="22" fill="#d6e8f5"/><path d="M2,5 H18 M2,9 H18 M2,13 H18 M2,17 H18 M2,21 H18" stroke="#6d9ecb" stroke-width="1" stroke-dasharray="2,1"/></svg>
<svg style="position:absolute;left:0px;top:2428px;" width="28" height="26" viewBox="0 0 28 26"><path d="M0,0 H18 V24 L9,16 L0,24 Z" fill="#777777"/></svg>
<div style="position:absolute;left:42.4px;top:2043.4px;height:31.2px;line-height:31.2px;font-family:'Liberation Sans',sans-serif;font-size:24px;color:#000;font-weight:400;font-style:normal;letter-spacing:1.042px;white-space:pre;-webkit-text-stroke:0.5px #000;">Debug:</div>
<svg style="position:absolute;left:152px;top:2050px;" width="18" height="18" viewBox="0 0 18 18"><path d="M2,2 L16,16 M16,2 L2,16" stroke="#b0b0b0" stroke-width="2"/></svg>
<svg style="position:absolute;left:186px;top:2043px;" width="34" height="34" viewBox="0 0 34 34"><path d="M4,1.5 H27.5 V24" stroke="#a9b3bb" stroke-width="3" fill="none"/><rect x="1.5" y="7.5" width="22" height="18" fill="#8ec6e2" stroke="#a9b3bb" stroke-width="3"/><circle cx="26.5" cy="27.5" r="4.6" fill="#64f04c" stroke="#888" stroke-width="1.4"/></svg>
<div style="position:absolute;left:224px;top:2043.4px;height:31.2px;line-height:31.2px;font-family:'Liberation Sans',sans-serif;font-size:24px;color:#000;font-weight:400;font-style:normal;letter-spacing:1.033px;white-space:pre;-webkit-text-stroke:0.5px #000;">Bootstrap</div>
<div style="position:absolute;left:140px;top:2080px;width:220px;height:5px;background:#4f80c8;"></div>
<svg style="position:absolute;left:3735px;top:2043px;" width="30" height="30" viewBox="0 0 30 30"><circle cx="15" cy="15" r="9.62" fill="#777777"/><rect x="12.01" y="2.00" width="5.98" height="7.80" fill="#777777" transform="rotate(0 15 15)"/><rect x="12.01" y="2.00" width="5.98" height="7.80" fill="#777777" transform="rotate(60 15 15)"/><rect x="12.01" y="2.00" width="5.98" height="7.80" fill="#777777" transform="rotate(120 15 15)"/><rect x="12.01" y="2.00" width="5.98" height="7.80" fill="#777777" transform="rotate(180 15 15)"/><rect x="12.01" y="2.00" width="5.98" height="7.80" fill="#777777" transform="rotate(240 15 15)"/><rect x="12.01" y="2.00" width="5.98" height="7.80" fill="#777777" transform="rotate(300 15 15)"/><circle cx="15" cy="15" r="4.55" fill="#e3e6eb"/></svg>
<div style="position:absolute;left:3790px;top:2056px;width:24px;height:4px;background:#777777;"></div>
<svg style="position:absolute;left:100px;top:2114px;" width="18" height="18" viewBox="0 0 18 18"><circle cx="9" cy="9" r="8" fill="#e9b54f"/><path d="M9,3 V13 M5,9 L9,13 L13,9" stroke="#333" stroke-width="1.8" fill="none"/></svg>
<div style="position:absolute;left:115.3px;top:2100.6px;height:29.9px;line-height:29.9px;font-family:'Liberation Sans',sans-serif;font-size:23px;color:#000;font-weight:400;font-style:normal;letter-spacing:0.427px;white-space:pre;-webkit-text-stroke:0.5px #000;">Variables | Memory | Overhead | Threads</div>
<div style="position:absolute;left:602.7px;top:2100.6px;height:29.9px;line-height:29.9px;font-family:'Liberation Sans',sans-serif;font-size:23px;color:#000;font-weight:400;font-style:normal;letter-spacing:-0.082px;white-space:pre;-webkit-text-stroke:0.5px #000;">Console</div>
<div style="position:absolute;left:739.2px;top:2100.6px;height:29.9px;line-height:29.9px;font-family:'Liberation Sans',sans-serif;font-size:23px;color:#000;font-weight:400;font-style:normal;letter-spacing:-0.711px;white-space:pre;-webkit-text-stroke:0.5px #000;">Frames</div>
<div style="position:absolute;left:712px;top:2137px;width:130px;height:4px;background:#4f80c8;"></div>
<svg style="position:absolute;left:853px;top:2101px;" width="26" height="26" viewBox="0 0 26 26"><path d="M1,3 H25 M1,13 H25 M1,23 H25" stroke="#777777" stroke-width="3.5"/><path d="M4,13 H22" stroke="#4a90d9" stroke-width="3.5"/></svg>
<div style="position:absolute;left:898px;top:2095px;width:2px;height:38px;background:#c9c9c9;"></div>
<svg style="position:absolute;left:917px;top:2098px;" width="30" height="32" viewBox="0 0 30 32"><path d="M3,14 L10,7 L17,14 L22,9" stroke="#4a90d9" stroke-width="3" fill="none"/><path d="M20,5 H27 V12 Z" fill="#4a90d9"/><path d="M3,26 H27" stroke="#777777" stroke-width="3.5"/></svg>
<svg style="position:absolute;left:969px;top:2098px;" width="30" height="32" viewBox="0 0 30 32"><path d="M15,2 V15" stroke="#4a90d9" stroke-width="3"/><path d="M8,12 L15,20 L22,12 Z" fill="#4a90d9"/><path d="M3,26 H27" stroke="#777777" stroke-width="3.5"/></svg>
<svg style="position:absolute;left:1021px;top:2098px;" width="30" height="32" viewBox="0 0 30 32"><path d="M15,2 V15" stroke="#d5545b" stroke-width="3"/><path d="M8,12 L15,20 L22,12 Z" fill="#d5545b"/><path d="M3,26 H27" stroke="#777777" stroke-width="3.5"/></svg>
<svg style="position:absolute;left:1073px;top:2098px;" width="30" height="32" viewBox="0 0 30 32"><path d="M15,8 V22" stroke="#4a90d9" stroke-width="3"/><path d="M8,11 L15,3 L22,11 Z" fill="#4a90d9"/><path d="M3,26 H27" stroke="#777777" stroke-width="3.5"/></svg>
<svg style="position:absolute;left:1125px;top:2098px;" width="30" height="32" viewBox="0 0 30 32"><path d="M2,2 L10,10 M10,2 L2,10" stroke="#d5545b" stroke-width="3"/><path d="M10,14 H24 V28 H12 V20" stroke="#777777" stroke-width="3" fill="none"/></svg>
<svg style="position:absolute;left:1177px;top:2098px;" width="30" height="34" viewBox="0 0 30 34"><path d="M2,3 L12,12" stroke="#4a90d9" stroke-width="3"/><path d="M7,14 H15 V6 Z" fill="#4a90d9"/><path d="M20,14 H26 M23,14 V31 M20,31 H26" stroke="#333" stroke-width="2" fill="none"/></svg>
<div style="position:absolute;left:1224px;top:2095px;width:2px;height:38px;background:#c9c9c9;"></div>
<svg style="position:absolute;left:1244px;top:2099px;" width="28" height="30" viewBox="0 0 28 30"><rect x="1" y="1" width="26" height="28" fill="#777777"/><rect x="5" y="5" width="18" height="5" fill="#f2f2f2"/><path d="M5,13 H23 M5,18 H23 M5,23 H23 M10,10 V27 M15,10 V27 M20,10 V27" stroke="#f2f2f2" stroke-width="2"/></svg>
<svg style="position:absolute;left:1295px;top:2100px;" width="30" height="28" viewBox="0 0 30 28"><path d="M1,4 H9 M13,4 H27 M1,13 H27 M1,22 H15 M19,22 H27 M10,2 L16,24" stroke="#c2c2c2" stroke-width="3" fill="none"/></svg>
<svg style="position:absolute;left:3790px;top:2099px;" width="34" height="32" viewBox="0 0 34 32"><rect x="0" y="0" width="16" height="10" fill="#777777"/><rect x="18" y="0" width="8" height="10" fill="#777777"/><rect x="0" y="12" width="26" height="8" fill="#777777"/><path d="M22,22 H33 L27.5,28 Z" fill="#333"/></svg>
<svg style="position:absolute;left:106px;top:2157px;" width="32" height="24" viewBox="0 0 32 24"><path d="M3,13 L10,20 L26,3" stroke="#e8916a" stroke-width="4.5" fill="none"/></svg>
<div style="position:absolute;left:144.4px;top:2155.1px;height:33.8px;line-height:33.8px;font-family:'Liberation Sans',sans-serif;font-size:26px;color:#000;font-weight:400;font-style:normal;letter-spacing:1.163px;white-space:pre;-webkit-text-stroke:0.5px #000;">"localhost-startStop-1"@1,886 in group "main": RUNNING</div>
<svg style="position:absolute;left:3734px;top:2156px;" width="28" height="30" viewBox="0 0 28 30"><path d="M1,1 H26 L16,12 V28 H11 V12 Z" fill="#777777"/></svg>
<svg style="position:absolute;left:3788px;top:2164px;" width="20" height="12" viewBox="0 0 20 12"><path d="M0,0 H19 L9.5,10 Z" fill="#777777"/></svg>
<div style="position:absolute;left:0;top:2199px;width:3828px;height:233px;overflow:hidden"><div style="position:absolute;left:0;top:-2199px;width:3828px;height:2548px"><div style="position:absolute;left:120px;top:2205.1px;height:33.8px;line-height:33.8px;font-family:'Liberation Sans',sans-serif;font-size:26px;color:#fff;font-weight:400;font-style:normal;letter-spacing:1.233px;white-space:pre;-webkit-text-stroke:0.5px #fff;">populateSessionTrackingModes:1038, ApplicationContext</div><div style="position:absolute;left:860px;top:2205.1px;height:33.8px;line-height:33.8px;font-family:'Liberation Sans',sans-serif;font-size:26px;color:#fff;font-weight:400;font-style:italic;letter-spacing:0.877px;white-space:pre;-webkit-text-stroke:0.5px #fff;">(org.apache.catalina.core)</div><div style="position:absolute;left:121px;top:2245.1px;height:33.8px;line-height:33.8px;font-family:'Liberation Sans',sans-serif;font-size:26px;color:#000;font-weight:400;font-style:normal;letter-spacing:1.792px;white-space:pre;-webkit-text-stroke:0.5px #000;">&lt;init&gt;:134, ApplicationContext</div><div style="position:absolute;left:529px;top:2245.1px;height:33.8px;line-height:33.8px;font-family:'Liberation Sans',sans-serif;font-size:26px;color:#8c8c8c;font-weight:400;font-style:italic;letter-spacing:0.862px;white-space:pre;-webkit-text-stroke:0.5px #8c8c8c;">(org.apache.catalina.core)</div><div style="position:absolute;left:121px;top:2285.1px;height:33.8px;line-height:33.8px;font-family:'Liberation Sans',sans-serif;font-size:26px;color:#000;font-weight:400;font-style:normal;letter-spacing:1.123px;white-space:pre;-webkit-text-stroke:0.5px #000;">getServletContext:2632, StandardContext</div><div style="position:absolute;left:657px;top:2285.1px;height:33.8px;line-height:33.8px;font-family:'Liberation Sans',sans-serif;font-size:26px;color:#8c8c8c;font-weight:400;font-style:italic;letter-spacing:0.877px;white-space:pre;-webkit-text-stroke:0.5px #8c8c8c;">(org.apache.catalina.core)</div><div style="position:absolute;left:121px;top:2325.1px;height:33.8px;line-height:33.8px;font-family:'Liberation Sans',sans-serif;font-size:26px;color:#000;font-weight:400;font-style:normal;letter-spacing:1.211px;white-space:pre;-webkit-text-stroke:0.5px #000;">postWorkDirectory:6755, StandardContext</div><div style="position:absolute;left:667px;top:2325.1px;height:33.8px;line-height:33.8px;font-family:'Liberation Sans',sans-serif;font-size:26px;color:#8c8c8c;font-weight:400;font-style:italic;letter-spacing:0.877px;white-space:pre;-webkit-text-stroke:0.5px #8c8c8c;">(org.apache.catalina.core)</div><div style="position:absolute;left:121px;top:2365.1px;height:33.8px;line-height:33.8px;font-family:'Liberation Sans',sans-serif;font-size:26px;color:#000;font-weight:400;font-style:normal;letter-spacing:1.237px;white-space:pre;-webkit-text-stroke:0.5px #000;">startInternal:5676, StandardContext</div><div style="position:absolute;left:587px;top:2365.1px;height:33.8px;line-height:33.8px;font-family:'Liberation Sans',sans-serif;font-size:26px;color:#8c8c8c;font-weight:400;font-style:italic;letter-spacing:0.838px;white-space:pre;-webkit-text-stroke:0.5px #8c8c8c;">(org.apache.catalina.core)</div><div style="position:absolute;left:121px;top:2405.1px;height:33.8px;line-height:33.8px;font-family:'Liberation Sans',sans-serif;font-size:26px;color:#000;font-weight:400;font-style:normal;letter-spacing:0.724px;white-space:pre;-webkit-text-stroke:0.5px #000;">start:148, LifecycleBase</div><div style="position:absolute;left:425.7px;top:2405.1px;height:33.8px;line-height:33.8px;font-family:'Liberation Sans',sans-serif;font-size:26px;color:#8c8c8c;font-weight:400;font-style:italic;letter-spacing:1.063px;white-space:pre;-webkit-text-stroke:0.5px #8c8c8c;">(org.apache.catalina.util)</div></div></div>
<div style="position:absolute;left:104px;top:2440.6px;height:29.9px;line-height:29.9px;font-family:'Liberation Sans',sans-serif;font-size:23px;color:#8c8c8c;font-weight:400;font-style:normal;letter-spacing:0.275px;white-space:pre;-webkit-text-stroke:0.5px #8c8c8c;">Switch frames from anywhere in the IDE with ⌥⌘↑ and ⌥⌘↓</div>
<svg style="position:absolute;left:3794px;top:2444px;" width="22" height="22" viewBox="0 0 22 22"><path d="M2,2 L20,20 M20,2 L2,20" stroke="#b0b0b0" stroke-width="2"/></svg>
<svg style="position:absolute;left:42px;top:2098px;" width="32" height="34" viewBox="0 0 32 34"><path d="M22,8 A10,10 0 1 0 10,26" stroke="#62a25f" stroke-width="3.5" fill="none"/><path d="M18,2 L28,8 L18,14 Z" fill="#62a25f"/><rect x="15" y="18" width="11" height="11" fill="#777777"/></svg>
<svg style="position:absolute;left:42px;top:2150px;" width="32" height="32" viewBox="0 0 32 32"><path d="M4,27 L16,15" stroke="#777777" stroke-width="5"/><path d="M14,16 A8,8 0 1 1 24,6 L19,11 L22,14 L27,9 A8,8 0 0 1 16,18" fill="#777777"/></svg>
<div style="position:absolute;left:37px;top:2198px;width:42px;height:2px;background:#d4d4d4;"></div>
<svg style="position:absolute;left:44px;top:2216px;" width="30" height="30" viewBox="0 0 30 30"><rect x="2" y="2" width="6" height="26" fill="#62a25f"/><path d="M11,2 L27,15 L11,28 Z" fill="#62a25f"/></svg>
<svg style="position:absolute;left:44px;top:2268px;" width="30" height="30" viewBox="0 0 30 30"><rect x="6" y="3" width="6" height="24" fill="#c2c2c2"/><rect x="17" y="3" width="6" height="24" fill="#c2c2c2"/></svg>
<div style="position:absolute;left:48px;top:2326px;width:20px;height:20px;background:#cf5b5f;"></div>
<div style="position:absolute;left:37px;top:2368px;width:42px;height:2px;background:#d4d4d4;"></div>
<svg style="position:absolute;left:44px;top:2386px;" width="32" height="30" viewBox="0 0 32 30"><circle cx="11" cy="18" r="10" fill="#d5545b"/><circle cx="20" cy="11" r="9" fill="#d5545b" stroke="#f2f2f2" stroke-width="2"/></svg>
<div style="position:absolute;left:50px;top:2441.4px;height:31.2px;line-height:31.2px;font-family:'Liberation Sans',sans-serif;font-size:24px;color:#777777;font-weight:400;font-style:normal;letter-spacing:0.000px;white-space:pre;-webkit-text-stroke:0.5px #777777;">››</div>
<div style="position:absolute;left:1166px;top:2478px;width:144px;height:40px;background:#bdbdbd;"></div>
<div style="position:absolute;left:84px;top:2484.6px;height:29.9px;line-height:29.9px;font-family:'Liberation Sans',sans-serif;font-size:23px;color:#000;font-weight:400;font-style:normal;letter-spacing:0.078px;white-space:pre;-webkit-text-stroke:0.5px #000;">Problems</div>
<div style="position:absolute;left:256px;top:2484.6px;height:29.9px;line-height:29.9px;font-family:'Liberation Sans',sans-serif;font-size:23px;color:#000;font-weight:400;font-style:normal;letter-spacing:0.136px;white-space:pre;-webkit-text-stroke:0.5px #000;">Build</div>
<div style="position:absolute;left:377.8px;top:2484.6px;height:29.9px;line-height:29.9px;font-family:'Liberation Sans',sans-serif;font-size:23px;color:#000;font-weight:400;font-style:normal;letter-spacing:0.155px;white-space:pre;-webkit-text-stroke:0.5px #000;">Git</div>
<div style="position:absolute;left:482.6px;top:2484.6px;height:29.9px;line-height:29.9px;font-family:'Liberation Sans',sans-serif;font-size:23px;color:#000;font-weight:400;font-style:normal;letter-spacing:0.363px;white-space:pre;-webkit-text-stroke:0.5px #000;">Profiler</div>
<div style="position:absolute;left:630px;top:2484.6px;height:29.9px;line-height:29.9px;font-family:'Liberation Sans',sans-serif;font-size:23px;color:#000;font-weight:400;font-style:normal;letter-spacing:-0.677px;white-space:pre;-webkit-text-stroke:0.5px #000;">TODO</div>
<div style="position:absolute;left:771.6px;top:2484.6px;height:29.9px;line-height:29.9px;font-family:'Liberation Sans',sans-serif;font-size:23px;color:#000;font-weight:400;font-style:normal;letter-spacing:0.033px;white-space:pre;-webkit-text-stroke:0.5px #000;">Sequence Diagram</div>
<div style="position:absolute;left:1052px;top:2484.6px;height:29.9px;line-height:29.9px;font-family:'Liberation Sans',sans-serif;font-size:23px;color:#000;font-weight:400;font-style:normal;letter-spacing:0.868px;white-space:pre;-webkit-text-stroke:0.5px #000;">Terminal</div>
<div style="position:absolute;left:1220.5px;top:2484.6px;height:29.9px;line-height:29.9px;font-family:'Liberation Sans',sans-serif;font-size:23px;color:#000;font-weight:400;font-style:normal;letter-spacing:0.180px;white-space:pre;-webkit-text-stroke:0.5px #000;">Debug</div>
<svg style="position:absolute;left:51px;top:2487px;" width="24" height="24" viewBox="0 0 24 24"><circle cx="12" cy="12" r="11" fill="#777777"/><path d="M12,5 V14" stroke="#fff" stroke-width="3"/><circle cx="12" cy="18" r="1.8" fill="#fff"/></svg>
<svg style="position:absolute;left:222px;top:2486px;" width="26" height="26" viewBox="0 0 26 26"><path d="M1,9 L9,1 L13,1 L10,4 L24,19 L20,23 L6,9 L4,12 Z" fill="#777777"/></svg>
<svg style="position:absolute;left:347px;top:2486px;" width="20" height="28" viewBox="0 0 20 28"><circle cx="4" cy="4" r="3.5" fill="#777777"/><path d="M4,6 V26 M4,20 Q15,18 15,8" stroke="#777777" stroke-width="3" fill="none"/></svg>
<svg style="position:absolute;left:447px;top:2485px;" width="28" height="28" viewBox="0 0 28 28"><path d="M16,22 A10,10 0 1 1 21,8" stroke="#777777" stroke-width="2.5" fill="none"/><path d="M11,6 V12 L8,15" stroke="#777777" stroke-width="2" fill="none"/><path d="M13,12 L26,19 L13,27 Z" fill="#777777"/></svg>
<svg style="position:absolute;left:599px;top:2488px;" width="24" height="22" viewBox="0 0 24 22"><path d="M0,2 H4 M7,2 H22 M0,10 H4 M7,10 H22 M0,18 H4 M7,18 H22" stroke="#777777" stroke-width="3"/></svg>
<svg style="position:absolute;left:737px;top:2485px;" width="28" height="28" viewBox="0 0 28 28"><rect x="9" y="3" width="8" height="24" fill="#e7b142"/><path d="M0,6 H5 M20,22 H25" stroke="#3b8ef0" stroke-width="2.5"/><path d="M4,2 L8,6 L4,10 Z M24,18 L28,22 L24,26 Z" fill="#3b8ef0"/></svg>
<svg style="position:absolute;left:1019px;top:2487px;" width="24" height="24" viewBox="0 0 24 24"><rect x="0" y="1" width="23" height="21" fill="#777777"/><path d="M4,6 L9,10 L4,14 M11,17 H18" stroke="#f2f2f2" stroke-width="2" fill="none"/></svg>
<svg style="position:absolute;left:1187px;top:2484px;" width="28" height="30" viewBox="0 0 28 30"><path d="M6,2 L10,6 M18,2 L14,6" stroke="#777777" stroke-width="2"/><ellipse cx="12" cy="15" rx="8" ry="10" fill="#777777"/><path d="M0,11 H24 M0,16 H24 M0,21 H24" stroke="#777777" stroke-width="2"/><circle cx="20" cy="24" r="5" fill="#59d13f" stroke="#777777" stroke-width="1.2"/></svg>
<svg style="position:absolute;left:3627px;top:2485px;" width="28" height="28" viewBox="0 0 28 28"><circle cx="13.5" cy="13.5" r="13" fill="#5aa45a"/><rect x="14" y="14" width="13" height="13" fill="#5aa45a"/><path d="M14.5,7 V21 M10.5,10 L14.5,7" stroke="#fff" stroke-width="2.8" fill="none"/></svg>
<div style="position:absolute;left:3663px;top:2484.6px;height:29.9px;line-height:29.9px;font-family:'Liberation Sans',sans-serif;font-size:23px;color:#000;font-weight:400;font-style:normal;letter-spacing:-0.274px;white-space:pre;-webkit-text-stroke:0.5px #000;">Event Log</div>
<svg style="position:absolute;left:0px;top:2528px;" width="26" height="22" viewBox="0 0 26 22"><rect x="7" y="2" width="16" height="18" fill="none" stroke="#777777" stroke-width="1.5"/><path d="M3,6 V22" stroke="#777777" stroke-width="1.5"/></svg>
<div style="position:absolute;left:49.7px;top:2527.1px;height:29.9px;line-height:29.9px;font-family:'Liberation Sans',sans-serif;font-size:23px;color:#000;font-weight:400;font-style:normal;letter-spacing:0.819px;white-space:pre;-webkit-text-stroke:0.5px #000;">All files are up-to-date (moments ago)</div>
<div style="position:absolute;left:3171.8px;top:2527.1px;height:29.9px;line-height:29.9px;font-family:'Liberation Sans',sans-serif;font-size:23px;color:#000;font-weight:400;font-style:normal;letter-spacing:0.334px;white-space:pre;-webkit-text-stroke:0.5px #000;">134:1</div>
<div style="position:absolute;left:3257px;top:2527.1px;height:29.9px;line-height:29.9px;font-family:'Liberation Sans',sans-serif;font-size:23px;color:#000;font-weight:400;font-style:normal;letter-spacing:-4.344px;white-space:pre;-webkit-text-stroke:0.5px #000;">LF</div>
<div style="position:absolute;left:3304.8px;top:2527.1px;height:29.9px;line-height:29.9px;font-family:'Liberation Sans',sans-serif;font-size:23px;color:#000;font-weight:400;font-style:normal;letter-spacing:0.107px;white-space:pre;-webkit-text-stroke:0.5px #000;">UTF-8</div>
<div style="position:absolute;left:3397px;top:2527.1px;height:29.9px;line-height:29.9px;font-family:'Liberation Sans',sans-serif;font-size:23px;color:#000;font-weight:400;font-style:normal;letter-spacing:-0.209px;white-space:pre;-webkit-text-stroke:0.5px #000;">4 spaces</div>
<div style="position:absolute;left:3547px;top:2527.1px;height:29.9px;line-height:29.9px;font-family:'Liberation Sans',sans-serif;font-size:23px;color:#000;font-weight:400;font-style:normal;letter-spacing:0.341px;white-space:pre;-webkit-text-stroke:0.5px #000;">master</div>
<svg style="position:absolute;left:3515px;top:2528px;" width="22" height="22" viewBox="0 0 22 22"><circle cx="4" cy="4" r="3.5" fill="#777777"/><path d="M4,6 V24 M4,18 Q16,16 16,6" stroke="#777777" stroke-width="3" fill="none"/></svg>
<svg style="position:absolute;left:3638px;top:2528px;" width="26" height="22" viewBox="0 0 26 22"><path d="M3,10 V6 A5,5 0 0 1 13,6" stroke="#777777" stroke-width="3" fill="none"/><rect x="8" y="10" width="16" height="14" fill="#777777"/></svg>
<svg style="position:absolute;left:3684px;top:2528px;" width="36" height="22" viewBox="0 0 36 22"><path d="M6,20 A8,8 0 0 1 10,6 A10,10 0 0 1 28,8 A7,7 0 0 1 30,20 Z" fill="#777777"/><path d="M15,9 A4,4 0 1 1 19,13 V15" stroke="#f2f2f2" stroke-width="2.5" fill="none"/></svg>
<svg style="position:absolute;left:3733px;top:2528px;" width="26" height="22" viewBox="0 0 26 22"><rect x="0" y="2" width="24" height="22" rx="3" fill="#9a9a9a"/><path d="M5,8 L10,12 L5,16" stroke="#f2f2f2" stroke-width="2" fill="none"/></svg>
<div style="position:absolute;left:3744px;top:2524.0px;height:26.0px;line-height:26.0px;font-family:'Liberation Sans',sans-serif;font-size:20px;color:#b0b0b0;font-weight:400;font-style:normal;letter-spacing:-7.306px;white-space:pre;-webkit-text-stroke:0.5px #b0b0b0;">CSDN @</div>
<svg style="position:absolute;left:3779px;top:2530px;" width="28" height="20" viewBox="0 0 28 20"><circle cx="6" cy="6" r="4" fill="#2f48d8"/><circle cx="14" cy="3" r="4" fill="#2f48d8"/><circle cx="22" cy="6" r="4" fill="#2f48d8"/><ellipse cx="14" cy="16" rx="9" ry="7" fill="#2f48d8"/></svg>
</body></html>
